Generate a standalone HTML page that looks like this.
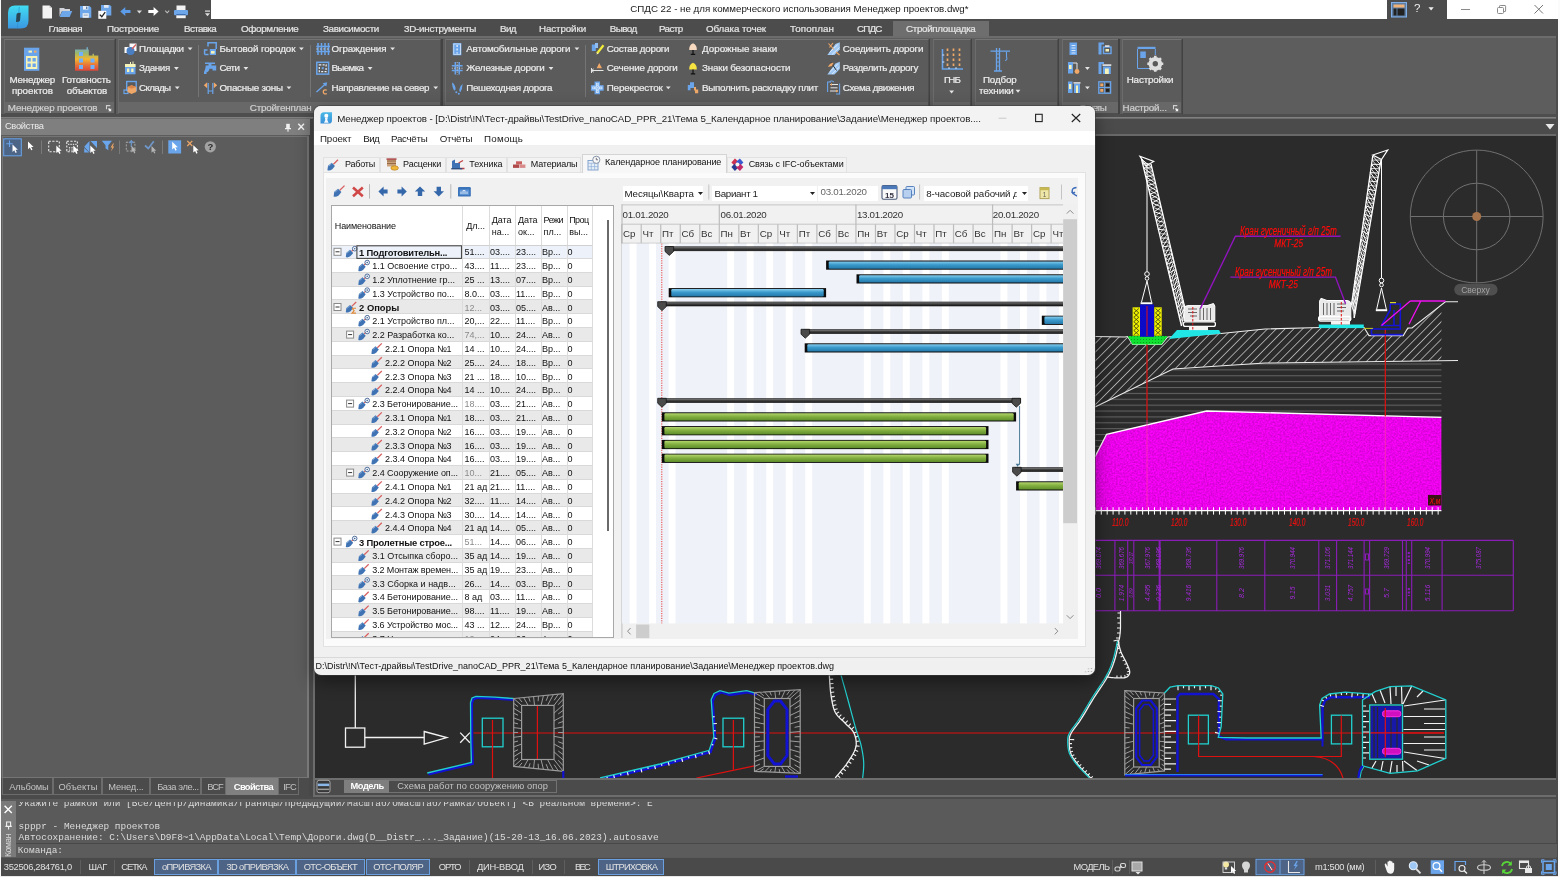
<!DOCTYPE html>
<html lang="ru"><head><meta charset="utf-8"><title>СПДС 22</title>
<style>
html,body{margin:0;padding:0}
body{width:1560px;height:877px;overflow:hidden;position:relative;background:#5c5c5c;font-family:"Liberation Sans",sans-serif;font-size:11px;color:#e6e6e6}
.a{position:absolute}
.t{position:absolute;white-space:nowrap;line-height:1}
svg{position:absolute;overflow:visible}
#app{position:absolute;left:0;top:0;width:1560px;height:877px;overflow:hidden;will-change:transform}

</style></head>
<body>
<div id="app">
<!-- sec_frame -->
<div class="a" style="left:0px;top:0px;width:1560px;height:19px;background:#4c4c4c;"></div>
<div class="a" style="left:211px;top:0px;width:1349px;height:19px;background:#ffffff;"></div>
<div class="a" style="left:1386.7px;top:0px;width:60.6px;height:19px;background:#4c4c4c;"></div>
<div class="a" style="left:0px;top:19px;width:1560px;height:17px;background:#4c4c4c;"></div>
<div class="a" style="left:1556px;top:19px;width:2px;height:858px;background:#4c4c4c;"></div>
<span class="t" style="left:630.30px;top:3.62px;font-size:9.75px;color:#1a1a1a;letter-spacing:-0.015px;">СПДС 22 - не для коммерческого использования Менеджер проектов.dwg*</span>
<div class="a" style="left:893px;top:21px;width:95.5px;height:16px;background:#6e6e6e;"></div>
<span class="t" style="left:48.50px;top:24.00px;font-size:9.8px;color:#e4e4e4;letter-spacing:-0.543px;-webkit-text-stroke-width:.22px;">Главная</span>
<span class="t" style="left:107.00px;top:24.00px;font-size:9.8px;color:#e4e4e4;letter-spacing:-0.257px;-webkit-text-stroke-width:.22px;">Построение</span>
<span class="t" style="left:184.00px;top:24.00px;font-size:9.8px;color:#e4e4e4;letter-spacing:-0.632px;-webkit-text-stroke-width:.22px;">Вставка</span>
<span class="t" style="left:241.00px;top:24.00px;font-size:9.8px;color:#e4e4e4;letter-spacing:-0.333px;-webkit-text-stroke-width:.22px;">Оформление</span>
<span class="t" style="left:323.00px;top:24.00px;font-size:9.8px;color:#e4e4e4;letter-spacing:-0.316px;-webkit-text-stroke-width:.22px;">Зависимости</span>
<span class="t" style="left:404.00px;top:24.00px;font-size:9.8px;color:#e4e4e4;letter-spacing:-0.237px;-webkit-text-stroke-width:.22px;">3D-инструменты</span>
<span class="t" style="left:500.00px;top:24.00px;font-size:9.8px;color:#e4e4e4;letter-spacing:-0.576px;-webkit-text-stroke-width:.22px;">Вид</span>
<span class="t" style="left:539.00px;top:24.00px;font-size:9.8px;color:#e4e4e4;letter-spacing:-0.117px;-webkit-text-stroke-width:.22px;">Настройки</span>
<span class="t" style="left:609.70px;top:24.00px;font-size:9.8px;color:#e4e4e4;letter-spacing:-0.526px;-webkit-text-stroke-width:.22px;">Вывод</span>
<span class="t" style="left:659.00px;top:24.00px;font-size:9.8px;color:#e4e4e4;letter-spacing:-0.600px;-webkit-text-stroke-width:.22px;">Растр</span>
<span class="t" style="left:706.00px;top:24.00px;font-size:9.8px;color:#e4e4e4;letter-spacing:-0.091px;-webkit-text-stroke-width:.22px;">Облака точек</span>
<span class="t" style="left:790.00px;top:24.00px;font-size:9.8px;color:#e4e4e4;letter-spacing:0.086px;-webkit-text-stroke-width:.22px;">Топоплан</span>
<span class="t" style="left:857.00px;top:24.00px;font-size:9.8px;color:#e4e4e4;letter-spacing:-0.834px;-webkit-text-stroke-width:.22px;">СПДС</span>
<span class="t" style="left:906.00px;top:24.00px;font-size:9.8px;color:#e4e4e4;letter-spacing:-0.324px;-webkit-text-stroke-width:.22px;">Стройплощадка</span>
<svg style="left:8px;top:5px" width="21" height="24" viewBox="0 0 21 24">
<defs><linearGradient id="lg1" x1="0" y1="0" x2="0" y2="1"><stop offset="0" stop-color="#41dcf2"/><stop offset="1" stop-color="#3a97e2"/></linearGradient></defs>
<path d="M7 0.5 H20.5 V16 Q20.5 23.5 13 23.5 H0 V7.5 Q0 0.5 7 0.5 Z" fill="url(#lg1)"/>
<path d="M11.3 2 L9.3 23.5" stroke="#2f86c8" stroke-width="1" opacity=".55"/>
<path d="M8.5 9.4 Q8.7 8.1 10 8 L12.7 7.7 L12 15.6 Q11.8 16.6 10.6 16.7 L8 16.9 Z" fill="#2b4654"/>
</svg>
<svg style="left:40px;top:2px" width="175" height="17" viewBox="40 2 175 17">
<path d="M42.5 5.5 H49.5 L52 8 V18.5 H42.5 Z" fill="#f4f4f4"/><path d="M49.5 5.5 V8 H52 Z" fill="#c8c8c8"/>
<path d="M59.5 8 H64 L65 9 H70 V11 H62 L59.5 16.5 Z" fill="#d0d4da"/><path d="M62.3 11 H72.3 L69.6 17 H59.6 Z" fill="#6ea6ea"/>
<path d="M80 6 H89.5 L91.3 7.8 V17.8 H80 Z" fill="#6ea6ea"/><rect x="83" y="6" width="5.3" height="3.6" fill="#e9eef6"/><rect x="86" y="6.6" width="1.4" height="2.4" fill="#5f7fa8"/><rect x="82.6" y="13.2" width="6.2" height="4.6" fill="#e9eef6"/><rect x="83.6" y="14.6" width="4.2" height="1" fill="#8ea2bd"/>
<path d="M101 5 H109.8 L111.3 6.5 V15.5 H101 Z" fill="#6ea6ea"/><rect x="104" y="5" width="4.6" height="2.8" fill="#dfe8f5"/>
<rect x="98.3" y="10.8" width="8" height="8" fill="#fafafa"/><path d="M99.8 14.6 L101.8 16.8 L105.2 12.2" stroke="#222" stroke-width="1.3" fill="none"/>
<path d="M120.3 11.5 L125.3 7 V10 H130.5 V13 H125.3 V16 Z" fill="#5b9be8"/>
<path d="M136.8 10.5 H142 L139.4 13.6 Z" fill="#d8d8d8"/>
<path d="M158.6 11.5 L153.6 7 V10 H148.3 V13 H153.6 V16 Z" fill="#ffffff"/>
<path d="M165.2 10.7 L167.2 12.8 L169.2 10.7" stroke="#bdbdbd" stroke-width="1.1" fill="none"/>
<rect x="176.5" y="5.5" width="9" height="4.5" fill="#f2f2f2"/><rect x="174" y="10" width="14" height="5.2" rx="1" fill="#6ea6ea"/><rect x="176.3" y="15.2" width="9.4" height="3" fill="#f2f2f2"/><rect x="176.3" y="14" width="9.4" height="1.2" fill="#3e6fb2"/>
<rect x="205" y="10.5" width="5" height="1.2" fill="#e0e0e0"/><path d="M205 13.3 H210 L207.5 16.2 Z" fill="#e0e0e0"/>
</svg>
<svg style="left:1385px;top:0px" width="175" height="19" viewBox="1385 0 175 19">
<rect x="1391.5" y="2.5" width="15" height="14.5" fill="#5f7ea5" stroke="#7fb0ea" stroke-width="1"/>
<rect x="1393.5" y="4.5" width="11" height="3" fill="#f0b277"/><rect x="1393.5" y="8.5" width="3" height="7" fill="#222"/><rect x="1397.5" y="8.5" width="7" height="7" fill="#222"/>
<path d="M1428.5 7.3 H1433.7 L1431.1 10.4 Z" fill="#f0f0f0"/>
<path d="M1461 9.5 H1470" stroke="#8a8a8a" stroke-width="1"/>
<rect x="1497.5" y="7.5" width="6" height="6" rx="1" fill="none" stroke="#8a8a8a" stroke-width="1"/><path d="M1499.5 7.5 V6.2 Q1499.5 5.5 1500.3 5.5 H1505 Q1505.6 5.5 1505.6 6.2 V11 Q1505.6 11.6 1505 11.6 H1503.6" fill="none" stroke="#8a8a8a" stroke-width="1"/>
<path d="M1534.5 5 L1543 13.5 M1543 5 L1534.5 13.5" stroke="#777" stroke-width="1"/>
</svg>
<span class="t" style="left:1414.00px;top:3.45px;font-size:11.5px;color:#f0f0f0;">?</span>
<!-- sec_ribbon -->
<div style="-webkit-text-stroke-width:.22px">
<div class="a" style="left:0px;top:36px;width:1556px;height:2px;background:#6c6c6c;"></div>
<div class="a" style="left:1px;top:38px;width:1555px;height:76px;background:#5d5d5d;"></div>
<div class="a" style="left:0px;top:114.2px;width:1560px;height:2.8px;background:#4e4e4e;"></div>
<div class="a" style="left:4px;top:38.8px;width:111.3px;height:75.4px;background:#5b5b5b;box-sizing:border-box;border:1px solid #6c6c6c;border-top-color:#747474;border-right-color:#4e4e4e;border-bottom-color:#4e4e4e"></div>
<div class="a" style="left:5px;top:102px;width:109.3px;height:11.3px;background:#686868;"></div>
<div class="a" style="left:114.9px;top:38.8px;width:1.6px;height:75.4px;background:#434343;"></div>
<div class="a" style="left:117.8px;top:38.8px;width:323.7px;height:75.4px;background:#5b5b5b;box-sizing:border-box;border:1px solid #6c6c6c;border-top-color:#747474;border-right-color:#4e4e4e;border-bottom-color:#4e4e4e"></div>
<div class="a" style="left:118.8px;top:102px;width:321.7px;height:11.3px;background:#686868;"></div>
<div class="a" style="left:441.1px;top:38.8px;width:1.6px;height:75.4px;background:#434343;"></div>
<div class="a" style="left:444.6px;top:38.8px;width:484.6px;height:75.4px;background:#5b5b5b;box-sizing:border-box;border:1px solid #6c6c6c;border-top-color:#747474;border-right-color:#4e4e4e;border-bottom-color:#4e4e4e"></div>
<div class="a" style="left:445.6px;top:102px;width:482.6px;height:11.3px;background:#686868;"></div>
<div class="a" style="left:928.8px;top:38.8px;width:1.6px;height:75.4px;background:#434343;"></div>
<div class="a" style="left:932.5px;top:38.8px;width:38.5px;height:75.4px;background:#5b5b5b;box-sizing:border-box;border:1px solid #6c6c6c;border-top-color:#747474;border-right-color:#4e4e4e;border-bottom-color:#4e4e4e"></div>
<div class="a" style="left:933.5px;top:102px;width:36.5px;height:11.3px;background:#686868;"></div>
<div class="a" style="left:970.6px;top:38.8px;width:1.6px;height:75.4px;background:#434343;"></div>
<div class="a" style="left:974.5px;top:38.8px;width:83.5px;height:75.4px;background:#5b5b5b;box-sizing:border-box;border:1px solid #6c6c6c;border-top-color:#747474;border-right-color:#4e4e4e;border-bottom-color:#4e4e4e"></div>
<div class="a" style="left:975.5px;top:102px;width:81.5px;height:11.3px;background:#686868;"></div>
<div class="a" style="left:1057.6px;top:38.8px;width:1.6px;height:75.4px;background:#434343;"></div>
<div class="a" style="left:1061.5px;top:38.8px;width:57px;height:75.4px;background:#5b5b5b;box-sizing:border-box;border:1px solid #6c6c6c;border-top-color:#747474;border-right-color:#4e4e4e;border-bottom-color:#4e4e4e"></div>
<div class="a" style="left:1062.5px;top:102px;width:55px;height:11.3px;background:#686868;"></div>
<div class="a" style="left:1118.1px;top:38.8px;width:1.6px;height:75.4px;background:#434343;"></div>
<div class="a" style="left:1121.5px;top:38.8px;width:60.5px;height:75.4px;background:#5b5b5b;box-sizing:border-box;border:1px solid #6c6c6c;border-top-color:#747474;border-right-color:#4e4e4e;border-bottom-color:#4e4e4e"></div>
<div class="a" style="left:1122.5px;top:102px;width:58.5px;height:11.3px;background:#686868;"></div>
<div class="a" style="left:1181.6px;top:38.8px;width:1.6px;height:75.4px;background:#434343;"></div>
<span class="t" style="left:9.60px;top:75.30px;font-size:9.8px;color:#ececec;letter-spacing:-0.268px;">Менеджер</span>
<span class="t" style="left:11.90px;top:85.60px;font-size:9.8px;color:#ececec;letter-spacing:-0.011px;">проектов</span>
<span class="t" style="left:62.00px;top:75.30px;font-size:9.8px;color:#ececec;letter-spacing:-0.147px;">Готовность</span>
<span class="t" style="left:66.70px;top:85.60px;font-size:9.8px;color:#ececec;letter-spacing:-0.181px;">объектов</span>
<span class="t" style="left:7.80px;top:102.60px;font-size:9.8px;color:#cfcfcf;letter-spacing:-0.103px;">Менеджер проектов</span>
<span class="t" style="left:249.80px;top:102.60px;font-size:9.8px;color:#cfcfcf;letter-spacing:-0.195px;">Стройгенплан</span>
<span class="t" style="left:1079.00px;top:102.60px;font-size:9.8px;color:#cfcfcf;letter-spacing:-1.195px;">Отчеты</span>
<span class="t" style="left:1122.60px;top:102.60px;font-size:9.8px;color:#cfcfcf;letter-spacing:-0.236px;">Настрой...</span>
<span class="t" style="left:139.00px;top:43.60px;font-size:9.8px;color:#ececec;letter-spacing:-0.339px;">Площадки</span>
<span class="t" style="left:139.00px;top:63.20px;font-size:9.8px;color:#ececec;letter-spacing:-0.413px;">Здания</span>
<span class="t" style="left:139.00px;top:82.60px;font-size:9.8px;color:#ececec;letter-spacing:-0.651px;">Склады</span>
<span class="t" style="left:219.50px;top:43.60px;font-size:9.8px;color:#ececec;letter-spacing:-0.073px;">Бытовой городок</span>
<span class="t" style="left:219.50px;top:63.20px;font-size:9.8px;color:#ececec;letter-spacing:-0.566px;">Сети</span>
<span class="t" style="left:219.50px;top:82.60px;font-size:9.8px;color:#ececec;letter-spacing:-0.250px;">Опасные зоны</span>
<span class="t" style="left:331.40px;top:43.60px;font-size:9.8px;color:#ececec;letter-spacing:-0.101px;">Ограждения</span>
<span class="t" style="left:331.40px;top:63.20px;font-size:9.8px;color:#ececec;letter-spacing:-0.620px;">Выемка</span>
<span class="t" style="left:331.40px;top:82.60px;font-size:9.8px;color:#ececec;letter-spacing:-0.303px;">Направление на север</span>
<span class="t" style="left:466.20px;top:43.60px;font-size:9.8px;color:#ececec;letter-spacing:-0.150px;">Автомобильные дороги</span>
<span class="t" style="left:466.20px;top:63.20px;font-size:9.8px;color:#ececec;letter-spacing:-0.189px;">Железные дороги</span>
<span class="t" style="left:466.20px;top:82.60px;font-size:9.8px;color:#ececec;letter-spacing:-0.294px;">Пешеходная дорога</span>
<span class="t" style="left:606.70px;top:43.60px;font-size:9.8px;color:#ececec;letter-spacing:-0.285px;">Состав дороги</span>
<span class="t" style="left:606.70px;top:63.20px;font-size:9.8px;color:#ececec;letter-spacing:-0.138px;">Сечение дороги</span>
<span class="t" style="left:606.70px;top:82.60px;font-size:9.8px;color:#ececec;letter-spacing:-0.145px;">Перекресток</span>
<span class="t" style="left:702.00px;top:43.60px;font-size:9.8px;color:#ececec;letter-spacing:0.001px;">Дорожные знаки</span>
<span class="t" style="left:702.00px;top:63.20px;font-size:9.8px;color:#ececec;letter-spacing:-0.162px;">Знаки безопасности</span>
<span class="t" style="left:702.00px;top:82.60px;font-size:9.8px;color:#ececec;letter-spacing:-0.297px;">Выполнить раскладку плит</span>
<span class="t" style="left:842.70px;top:43.60px;font-size:9.8px;color:#ececec;letter-spacing:-0.167px;">Соединить дороги</span>
<span class="t" style="left:842.70px;top:63.20px;font-size:9.8px;color:#ececec;letter-spacing:-0.339px;">Разделить дорогу</span>
<span class="t" style="left:842.70px;top:82.60px;font-size:9.8px;color:#ececec;letter-spacing:-0.373px;">Схема движения</span>
<span class="t" style="left:944.00px;top:75.30px;font-size:9.8px;color:#ececec;letter-spacing:-0.939px;">ГНБ</span>
<span class="t" style="left:983.00px;top:75.30px;font-size:9.8px;color:#ececec;letter-spacing:-0.168px;">Подбор</span>
<span class="t" style="left:979.00px;top:85.60px;font-size:9.8px;color:#ececec;letter-spacing:-0.051px;">техники</span>
<span class="t" style="left:1126.70px;top:75.30px;font-size:9.8px;color:#ececec;letter-spacing:-0.150px;">Настройки</span>
<div class="a" style="left:197.5px;top:45px;width:1px;height:52px;background:#747474;"></div>
<div class="a" style="left:309.5px;top:45px;width:1px;height:52px;background:#747474;"></div>
<div class="a" style="left:584.7px;top:45px;width:1px;height:52px;background:#747474;"></div>
<svg style="left:0;top:0" width="1560" height="120" viewBox="0 0 1560 120"><path d="M187.7 47.4 h4.8 l-2.4 2.9 z" fill="#e4e4e4"/><path d="M174 67 h4.8 l-2.4 2.9 z" fill="#e4e4e4"/><path d="M174.8 86.4 h4.8 l-2.4 2.9 z" fill="#e4e4e4"/><path d="M299 47.4 h4.8 l-2.4 2.9 z" fill="#e4e4e4"/><path d="M243.5 67 h4.8 l-2.4 2.9 z" fill="#e4e4e4"/><path d="M286.5 86.4 h4.8 l-2.4 2.9 z" fill="#e4e4e4"/><path d="M390.2 47.4 h4.8 l-2.4 2.9 z" fill="#e4e4e4"/><path d="M367.7 67 h4.8 l-2.4 2.9 z" fill="#e4e4e4"/><path d="M433.3 86.4 h4.8 l-2.4 2.9 z" fill="#e4e4e4"/><path d="M574.5 47.4 h4.8 l-2.4 2.9 z" fill="#e4e4e4"/><path d="M548.6 67 h4.8 l-2.4 2.9 z" fill="#e4e4e4"/><path d="M665.9 86.4 h4.8 l-2.4 2.9 z" fill="#e4e4e4"/><path d="M949.2 90.6 h4.8 l-2.4 2.9 z" fill="#e4e4e4"/><path d="M1015.6 89.8 h4.8 l-2.4 2.9 z" fill="#e4e4e4"/><path d="M1085 67 h4.8 l-2.4 2.9 z" fill="#e4e4e4"/><path d="M1085 86.4 h4.8 l-2.4 2.9 z" fill="#e4e4e4"/><path d="M106.5 109.2 v-3.6 h3.8" stroke="#d0d0d0" stroke-width="1.1" fill="none"/><path d="M109.1 108 l1.2 1.2 l.9 -.9 v2.9 h-2.9 l.9 -.9 l-1.2 -1.2 z" fill="#f4f4f4"/><path d="M1173.5 109.2 v-3.6 h3.8" stroke="#d0d0d0" stroke-width="1.1" fill="none"/><path d="M1176.1 108 l1.2 1.2 l.9 -.9 v2.9 h-2.9 l.9 -.9 l-1.2 -1.2 z" fill="#f4f4f4"/><rect x="24" y="47.7" width="15.3" height="23.1" fill="#6aa5ec"/><rect x="26" y="50" width="11.3" height="4" fill="#6aa5ec"/><rect x="28.5" y="50.6" width="3.5" height="2" fill="#f5f3b8"/><rect x="34" y="50.6" width="2.5" height="2" fill="#f0a868"/><rect x="26" y="56" width="11.3" height="13" fill="#f5f3b8"/><rect x="27.5" y="58" width="3.3" height="3.5" fill="#6aa5ec"/><rect x="32.5" y="58" width="3.3" height="3.5" fill="#6aa5ec"/><rect x="27.5" y="63.5" width="3.3" height="3.5" fill="#6aa5ec"/><rect x="32.5" y="63.5" width="3.3" height="3.5" fill="#6aa5ec"/><defs><linearGradient id="rg" x1="0" y1="0" x2="0" y2="1"><stop offset="0" stop-color="#6fa8d8"/><stop offset=".25" stop-color="#9ab86a"/><stop offset=".5" stop-color="#f2b730"/><stop offset=".75" stop-color="#e8753a"/><stop offset="1" stop-color="#d9483e"/></linearGradient></defs><path d="M75 49.5 H86.5 V47.2 H88 V49.5 H88.8 V55.5 H92.5 V53.8 H94 V55.5 H98.3 V70.8 H75 Z" fill="url(#rg)"/><rect x="79" y="52" width="4" height="4" fill="#6fb0ff"/><rect x="79" y="58.5" width="4" height="4" fill="#6fb0ff"/><rect x="79" y="65" width="4" height="4" fill="#6fb0ff"/><rect x="90.5" y="58.5" width="4" height="4" fill="#6fb0ff"/><rect x="90.5" y="65" width="4" height="4" fill="#6fb0ff"/><rect x="129.5" y="43.5" width="7" height="7.5" fill="#fafafa"/><rect x="124.5" y="47" width="5" height="6" fill="#fafafa"/><circle cx="130.5" cy="51" r="4" fill="#4b7fc4"/><path d="M132 49 L136 44.5" stroke="#d65c5c" stroke-width="1.2"/><rect x="125" y="64.5" width="10.5" height="9.8" fill="#6aa5ec"/><rect x="125" y="64" width="10.5" height="3" fill="#f5f3b8"/><rect x="127" y="68.5" width="2.3" height="3.5" fill="#f5f3b8"/><rect x="131.2" y="68.5" width="2.3" height="3.5" fill="#f5f3b8"/><path d="M130.5 64 v-2 M133 64 v-2.5" stroke="#f5f3b8" stroke-width="1"/><rect x="126.7" y="81.5" width="9.5" height="9" fill="none" stroke="#6aa5ec" stroke-width="1.4"/><rect x="124" y="90" width="4" height="3.5" fill="none" stroke="#6aa5ec" stroke-width="1.2"/><path d="M127.5 87 L131.5 85.2 L136.3 87 V92 L131.5 94 L127.5 92 Z" fill="#f0a868"/><path d="M127.5 87 L131.5 88.8 L136.3 87 L131.5 85.2 Z" fill="#d9854a"/><path d="M208 46.5 V42.8 H216.2 V49 M204.6 54.5 V50 H207.5 M204.6 54.5 H208.5" stroke="#6aa5ec" stroke-width="1.5" fill="none"/><rect x="209.8" y="49" width="6.2" height="6" fill="#6aa5ec"/><rect x="211" y="51" width="3.6" height="2.6" fill="#f5f3b8"/><path d="M205 62.5 H215 V64 H211.5 V65.5 H216.2 V70.5 H212.5 V68.7 H209.5 Q208.8 72 206.5 72.3 V74 H204 V72 Q205.5 70 205.8 65.5 H208.5 V64 H205 Z" fill="#6aa5ec"/><path d="M203.8 85.3 L207.2 82.3 V88.3 Z M217.2 85.3 L213.8 82.3 V88.3 Z" fill="#f0a868"/><path d="M208.2 83 V94 M212.8 83 V94 M208.2 91 H212.8" stroke="#6aa5ec" stroke-width="1.2" fill="none"/><path d="M318 43 V55 M321.5 43 V55 M325 43 V55 M328.5 43 V55" stroke="#6aa5ec" stroke-width="1.5"/><path d="M316.3 46.5 H330 M316.3 51.5 H330" stroke="#6aa5ec" stroke-width="1.3"/><path d="M316.3 49 H330" stroke="#e8f0fb" stroke-width=".8" stroke-dasharray="1.5 2"/><rect x="316.8" y="62.3" width="11.8" height="11.8" fill="none" stroke="#6aa5ec" stroke-width="1.5"/><rect x="319.3" y="64.8" width="6.8" height="6.8" fill="none" stroke="#e8f0fb" stroke-width="1.2" stroke-dasharray="2 1.3"/><rect x="321.7" y="67.2" width="2" height="2" fill="#6aa5ec"/><path d="M316.5 92 L326 83.5" stroke="#6aa5ec" stroke-width="1.3"/><path d="M327.2 82.2 L322.6 83.2 L326.2 86.6 Z" fill="#6aa5ec"/><path d="M326.8 90.2 Q323.3 89.2 323.3 91.8 Q323.3 94.4 326.8 93.6" stroke="#f0a868" stroke-width="1.3" fill="none"/><rect x="452.8" y="43" width="8.6" height="12.3" fill="#6aa5ec"/><rect x="453.8" y="44" width="6.6" height="10.3" fill="none" stroke="#dbe8fa" stroke-width=".8"/><path d="M457.1 45 V53.5" stroke="#fff" stroke-width="1.1" stroke-dasharray="2 1.6"/><path d="M455.3 62 V74.5 M459.2 62 V74.5 M451.8 65.8 H462.6 M451.8 70.6 H462.6" stroke="#6aa5ec" stroke-width="1.5"/><path d="M457.2 62 V74.5 M451.8 68.2 H462.6" stroke="#dfe9f8" stroke-width=".7" stroke-dasharray="1.2 1.2"/><path d="M452 82.5 Q454.6 83.5 455.6 88 Q455.8 90.5 454.2 90.5 Q452.3 88 452 82.5 Z M462.6 84 Q460 85.5 459.3 89.5 Q459 92 460.5 92 Q462.3 89.5 462.6 84 Z" fill="#6aa5ec"/><circle cx="456.3" cy="92.3" r="1" fill="#6aa5ec"/><circle cx="458.8" cy="93.8" r="1" fill="#6aa5ec"/><rect x="591.8" y="44.5" width="4" height="6.5" fill="#6aa5ec"/><rect x="595" y="43" width="3" height="5" fill="#8fbdf2"/><path d="M597 53.5 L603.5 45.2" stroke="#f2ec3a" stroke-width="2.2"/><path d="M596.2 54.6 L597.6 52.6 L598.4 53.6 Z" fill="#eee"/><path d="M591.5 68 V73 M591.5 70.5 H603.5 M591.5 70.5 l2.2 -1.6 m-2.2 1.6 l2.2 1.6" stroke="#e6e6e6" stroke-width="1" fill="none"/><path d="M599.3 63 L602 68.2 H596.6 Z" fill="#f0a868"/><path d="M595.2 82.2 H599.4 V85.8 H603 V90 H599.4 V93.6 H595.2 V90 H591.6 V85.8 H595.2 Z" fill="#cfe4fb" stroke="#6aa5ec" stroke-width="1.3"/><path d="M597.3 83.5 V92.5 M593 87.9 H601.8" stroke="#6aa5ec" stroke-width=".8" stroke-dasharray="1.2 1.2"/><path d="M689.2 50 Q689 44.6 693 43.2 Q697 44.6 696.8 50 Z" fill="#f7d9c0"/><path d="M693 50 V54 M690.8 54.3 H695.2" stroke="#111" stroke-width="1.2"/><path d="M689.2 69.6 Q689 64.2 693 62.8 Q697 64.2 696.8 69.6 Z" fill="#f8e440"/><path d="M693 69.6 V73.6 M690.8 73.9 H695.2" stroke="#111" stroke-width="1.2"/><path d="M687.8 85 H690 V82.3 H694 V88 H690.5 V90.2 H687.8 Z" fill="#6aa5ec"/><path d="M694 87 H696 V89.5 H698.2 V93.3 H695 V90.6 H694 Z" fill="#f0a868"/><path d="M827.3 55 L835.5 44 L839.8 42.2 V49.5 L834.5 55 Z" fill="#9fc9f4"/><path d="M829.5 52.5 L837.8 44.5 M832 54.5 L839.5 47.5" stroke="#e9f3fd" stroke-width=".8"/><path d="M828.5 43.5 L834 49.5 M833 43 L829.5 47.5 M836 52 L839.5 55" stroke="#f0a868" stroke-width="1.1"/><path d="M827.3 74.5 L835.5 63.5 L839.8 61.7 V69 L834.5 74.5 Z" fill="#9fc9f4"/><path d="M829.5 72 L837.8 64 M832 74 L839.5 67" stroke="#e9f3fd" stroke-width=".8"/><path d="M831 62.5 L836.5 70.5" stroke="#333" stroke-width="1"/><path d="M828 67 Q829.5 63 833.5 62.8 L832 66 Z" fill="#f0a868"/><path d="M831 82 H827.6 V92 M836 94 H839.6 V83.5" stroke="#6aa5ec" stroke-width="1.1" fill="none"/><path d="M830 84.5 H838 M830.5 87.8 H837.5 M830 91 H838" stroke="#e6e6e6" stroke-width="1"/><path d="M830 84.5 l2 -1.5 v3 z M838 91 l-2 -1.5 v3 z" fill="#f0a868"/><path d="M829.5 81.5 Q832 80 834 82" stroke="#6aa5ec" stroke-width="1" fill="none"/><path d="M942.5 49 V69 H963" stroke="#6aa5ec" stroke-width="1.6" fill="none"/><path d="M942.5 55 h1.8 M942.5 62 h1.8 M949 69 v-1.8 M956 69 v-1.8" stroke="#dbe8fa" stroke-width="1"/><path d="M947.5 48.5 V66.5" stroke="#f0a868" stroke-width="1.7" stroke-dasharray="2.5 2.5"/><path d="M953.5 48.5 V66.5" stroke="#f0a868" stroke-width="1.7" stroke-dasharray="2.5 2.5"/><path d="M959.5 48.5 V66.5" stroke="#f0a868" stroke-width="1.7" stroke-dasharray="2.5 2.5"/><path d="M996.5 48 V71 M999.5 48 V71 M990.5 51.2 H1010 M994 71 H1002" stroke="#6aa5ec" stroke-width="1.3" fill="none"/><path d="M996.5 54 H999.5 M996.5 58 H999.5 M996.5 62 H999.5 M996.5 66 H999.5" stroke="#6aa5ec" stroke-width=".9"/><path d="M1006.5 51.5 V57 Q1007.8 60 1005 60.5" stroke="#6aa5ec" stroke-width="1.1" fill="none"/><rect x="1069.5" y="42.5" width="7.5" height="12.5" fill="#6aa5ec"/><path d="M1071.5 45.5 h4 M1071.5 48 h4 M1071.5 50.5 h4 M1071.5 53 h4" stroke="#e6effb" stroke-width=".9"/><rect x="1068" y="62" width="5" height="11.5" fill="#6aa5ec"/><rect x="1069" y="65" width="2.6" height="4" fill="#f5f3b8"/><path d="M1073 63 H1077 V70" stroke="#e8e8e8" stroke-width="1" fill="none"/><circle cx="1077" cy="71.5" r="2.4" fill="#f0a868"/><rect x="1068" y="81.5" width="4.5" height="11.5" fill="#6aa5ec"/><rect x="1069" y="84" width="2.2" height="5" fill="#f5f3b8"/><rect x="1074" y="83.5" width="6" height="9.5" fill="#6aa5ec"/><rect x="1076" y="85.5" width="2" height="7.5" fill="#f5f3b8"/><rect x="1073.5" y="82.2" width="7" height="1.4" fill="#e8e8e8"/><path d="M1098.5 42.5 H1104 V44.5 H1101.5 V54.5 H1098.5 Z" fill="#6aa5ec"/><rect x="1103.5" y="47" width="7.5" height="6.5" fill="none" stroke="#6aa5ec" stroke-width="1.4"/><rect x="1105.5" y="49" width="3.5" height="2.5" fill="#f5f3b8"/><rect x="1105" y="45.3" width="4.5" height="1.6" fill="#e8e8e8"/><path d="M1098.5 62 H1104 V64 H1101.5 V74 H1098.5 Z" fill="#6aa5ec"/><rect x="1103" y="66.5" width="7.8" height="7.5" fill="#6aa5ec"/><rect x="1105" y="68.5" width="3.8" height="5.5" fill="#f5f3b8"/><rect x="1102.5" y="64.3" width="8.8" height="1.6" fill="#e8e8e8"/><rect x="1098.8" y="81.8" width="11.8" height="11.4" fill="none" stroke="#6aa5ec" stroke-width="1.3"/><path d="M1104.7 81.8 V93.2 M1098.8 87.5 H1110.6" stroke="#6aa5ec" stroke-width="1"/><rect x="1100.3" y="83.5" width="3" height="2.8" fill="#f0a868"/><rect x="1100.3" y="89" width="3" height="2.8" fill="#f0a868"/><rect x="1106" y="83.5" width="3.2" height="2.8" fill="#222"/><rect x="1106" y="89" width="3.2" height="2.8" fill="#222"/><path d="M1137.5 46.8 H1155.5 V49 H1137.5 Z" fill="#6aa5ec"/><path d="M1137.5 49 V68.5 H1150 M1155.3 49 V55" stroke="#6aa5ec" stroke-width="1" fill="none"/><rect x="1140.3" y="51.5" width="5.5" height="6.5" fill="#6aa5ec"/><g transform="translate(1155.3 63.8)"><circle r="5.2" fill="none" stroke="#dedede" stroke-width="3.4"/><path d="M0 -8 V8 M-8 0 H8 M-5.7 -5.7 L5.7 5.7 M-5.7 5.7 L5.7 -5.7" stroke="#dedede" stroke-width="2.6"/><circle r="5.3" fill="#dedede"/><circle r="2.7" fill="#595959"/></g></svg>
</div>
<!-- sec_panel -->
<div class="a" style="left:1px;top:117.5px;width:308.5px;height:678px;background:#5c5c5c;"></div>
<div class="a" style="left:1px;top:777.5px;width:308px;height:18px;background:#4b4b4b;"></div>
<div class="a" style="left:308.8px;top:119px;width:4.2px;height:678.5px;background:#484848;"></div>
<div class="a" style="left:313px;top:119px;width:2px;height:678.5px;background:#6c6c6c;"></div>
<div class="a" style="left:1px;top:117px;width:1555px;height:1.2px;background:#808080;"></div>
<div class="a" style="left:1px;top:118.2px;width:1555px;height:0.9px;background:#6c6c6c;"></div>
<div class="a" style="left:1px;top:119px;width:308.5px;height:16.2px;background:#7f7f7f;"></div>
<span class="t" style="left:4.90px;top:122.05px;font-size:9.3px;color:#ececec;letter-spacing:-0.254px;">Свойства</span>
<div class="a" style="left:1.5px;top:136.2px;width:307.3px;height:641.5px;box-sizing:border-box;border:1px solid #747474;border-right:2px solid #787878;background:#5c5c5c"></div>
<svg style="left:0;top:0" width="320" height="160" viewBox="0 0 320 160"><path d="M286.2 123.8 H289.8 V128.3 H286.2 Z" fill="#f0f0f0"/><path d="M285 128.6 H291 M288 129 V131.8" stroke="#f0f0f0" stroke-width="1.1" fill="none"/><path d="M298.3 123.8 L304 129.8 M304 123.8 L298.3 129.8" stroke="#f4f4f4" stroke-width="1.4"/><rect x="3.7" y="138.8" width="17.6" height="17" fill="#4d6587" stroke="#6aa5ec" stroke-width="1"/><path d="M9.5 140.5 V147 M6.3 143.8 H12.7" stroke="#6aa5ec" stroke-width="1.1"/><path transform="translate(12.5 144.5) scale(0.86)" d="M0 0 V8.6 L2.1 6.7 L3.6 9.8 L5 9.1 L3.5 6.1 L6.2 6 Z" fill="#ffffff" opacity="1"/><path transform="translate(28 141.5) scale(0.903)" d="M0 0 V8.6 L2.1 6.7 L3.6 9.8 L5 9.1 L3.5 6.1 L6.2 6 Z" fill="#ffffff" opacity="1"/><path d="M41.5 140.5 V154" stroke="#7a7a7a" stroke-width="1"/><path d="M119.5 140.5 V154" stroke="#7a7a7a" stroke-width="1"/><path d="M162.5 140.5 V154" stroke="#7a7a7a" stroke-width="1"/><rect x="48.7" y="141.2" width="10.6" height="10.6" fill="none" stroke="#e8e8e8" stroke-width="1.1" stroke-dasharray="2.2 1.4"/><path transform="translate(56.3 145.5) scale(0.86)" d="M0 0 V8.6 L2.1 6.7 L3.6 9.8 L5 9.1 L3.5 6.1 L6.2 6 Z" fill="#ffffff" opacity="1"/><rect x="66.8" y="141.2" width="10.6" height="10.6" fill="none" stroke="#e8e8e8" stroke-width="1.1" stroke-dasharray="2.2 1.4"/><path d="M68 144.3 H77 M69.5 147 v4 M72 147 v4 M74.5 147 v4" stroke="#d8d8d8" stroke-width="1.2" stroke-dasharray="1.4 1"/><path transform="translate(73.3 145.5) scale(0.86)" d="M0 0 V8.6 L2.1 6.7 L3.6 9.8 L5 9.1 L3.5 6.1 L6.2 6 Z" fill="#ffffff" opacity="1"/><path d="M84.2 146.7 L89.5 141 V152.4 Z M90.5 141 H97 V148 Z M84.2 152.5 H89 L84.2 148 Z" fill="#6aa5ec"/><path transform="translate(90.3 145.5) scale(0.86)" d="M0 0 V8.6 L2.1 6.7 L3.6 9.8 L5 9.1 L3.5 6.1 L6.2 6 Z" fill="#ffffff" opacity="1"/><path d="M101.8 140.8 H112 L108.3 145.2 V150.3 L105.5 148.2 V145.2 Z" fill="#6aa5ec"/><path d="M113 143.5 L110.6 147.6 H112.4 L110.8 151.6 L114.3 146.6 H112.5 L114 143.5 Z" fill="#f0a868"/><rect x="126.3" y="142.2" width="8.6" height="8.8" fill="none" stroke="#a8a8a8" stroke-width="1" stroke-dasharray="2 1.4"/><path d="M131.3 147 V141 M129.3 143 L131.3 140.6 L133.3 143" stroke="#6f97c9" stroke-width="1.2" fill="none"/><path transform="translate(131.5 145.8) scale(0.774)" d="M0 0 V8.6 L2.1 6.7 L3.6 9.8 L5 9.1 L3.5 6.1 L6.2 6 Z" fill="#b4b4b4" opacity="1"/><path d="M145 145.5 L148.3 148.5 L153.8 141.3" stroke="#6f97c9" stroke-width="1.7" fill="none"/><path transform="translate(151.5 146) scale(0.774)" d="M0 0 V8.6 L2.1 6.7 L3.6 9.8 L5 9.1 L3.5 6.1 L6.2 6 Z" fill="#b4b4b4" opacity="1"/><rect x="168.3" y="140.3" width="12.8" height="13.2" fill="#6aa5ec"/><path transform="translate(172.2 141.8) scale(0.903)" d="M0 0 V8.6 L2.1 6.7 L3.6 9.8 L5 9.1 L3.5 6.1 L6.2 6 Z" fill="#ffffff" opacity="1"/><path d="M187.3 140.8 L192.3 146 M192.3 140.8 L187.3 146" stroke="#f0a868" stroke-width="1.2"/><path transform="translate(193.3 145.2) scale(0.86)" d="M0 0 V8.6 L2.1 6.7 L3.6 9.8 L5 9.1 L3.5 6.1 L6.2 6 Z" fill="#ffffff" opacity="1"/><circle cx="210.3" cy="146.8" r="5.6" fill="#a2a2a2"/></svg>
<span class="t" style="left:207.60px;top:141.95px;font-size:9.5px;color:#2a2a2a;font-weight:bold;">?</span>
<div class="a" style="left:2px;top:777.5px;width:50.5px;height:17.5px;box-sizing:border-box;border:1px solid #6c6c6c;border-top:none;background:#4b4b4b"></div>
<span class="t" style="left:9.20px;top:783.35px;font-size:9.3px;color:#c4c4c4;letter-spacing:-0.079px;">Альбомы</span>
<div class="a" style="left:52.5px;top:777.5px;width:49.3px;height:17.5px;box-sizing:border-box;border:1px solid #6c6c6c;border-top:none;background:#4b4b4b"></div>
<span class="t" style="left:58.50px;top:783.35px;font-size:9.3px;color:#c4c4c4;letter-spacing:0.078px;">Объекты</span>
<div class="a" style="left:101.8px;top:777.5px;width:48.2px;height:17.5px;box-sizing:border-box;border:1px solid #6c6c6c;border-top:none;background:#4b4b4b"></div>
<span class="t" style="left:108.20px;top:783.35px;font-size:9.3px;color:#c4c4c4;letter-spacing:-0.113px;">Менед...</span>
<div class="a" style="left:150px;top:777.5px;width:50.8px;height:17.5px;box-sizing:border-box;border:1px solid #6c6c6c;border-top:none;background:#4b4b4b"></div>
<span class="t" style="left:157.20px;top:783.35px;font-size:9.3px;color:#c4c4c4;letter-spacing:-0.416px;">База эле...</span>
<div class="a" style="left:200.8px;top:777.5px;width:25.6px;height:17.5px;box-sizing:border-box;border:1px solid #6c6c6c;border-top:none;background:#4b4b4b"></div>
<span class="t" style="left:207.20px;top:783.35px;font-size:9.3px;color:#c4c4c4;letter-spacing:-1.067px;">BCF</span>
<div class="a" style="left:226.4px;top:777.5px;width:51.3px;height:17.5px;background:#808080;"></div>
<span class="t" style="left:233.80px;top:783.35px;font-size:9.3px;color:#ffffff;letter-spacing:-0.625px;font-weight:bold;">Свойства</span>
<div class="a" style="left:277.7px;top:777.5px;width:21.8px;height:17.5px;box-sizing:border-box;border:1px solid #6c6c6c;border-top:none;background:#4b4b4b"></div>
<span class="t" style="left:283.30px;top:783.35px;font-size:9.3px;color:#c4c4c4;letter-spacing:-0.760px;">IFC</span>
<!-- sec_drawing -->
<div class="a" style="left:315px;top:119px;width:1241px;height:15px;background:#4b4b4b;"></div>
<div class="a" style="left:315px;top:134px;width:1241px;height:1.6px;background:#686868;"></div>
<div class="a" style="left:315px;top:135.6px;width:1241px;height:642.4px;background:#2b2b2b;"></div>
<svg style="left:0;top:0" width="1560" height="877" viewBox="0 0 1560 877"><defs>
<pattern id="hd" width="6.2" height="6.2" patternUnits="userSpaceOnUse" patternTransform="rotate(-45)"><rect width="6.2" height="0.75" fill="#c4c4c4"/></pattern>
<pattern id="hh" width="10" height="5.88" patternUnits="userSpaceOnUse" y="2.84"><rect width="10" height="1" y="2" fill="#646464"/></pattern>
<filter id="mgf" x="0" y="0" width="100%" height="100%" color-interpolation-filters="sRGB"><feTurbulence type="fractalNoise" baseFrequency="0.55" numOctaves="2" seed="11" result="n"/><feColorMatrix in="n" type="matrix" values="0.35 0 0 0 0.74  0 0 0 0 0.01  0.35 0 0 0 0.74  0 0 0 0 1" result="c"/><feComposite in="c" in2="SourceGraphic" operator="in"/></filter>
<pattern id="gn" width="3" height="3" patternUnits="userSpaceOnUse"><rect width="3" height="3" fill="#10e030"/><rect width="1" height="1" fill="#0a9a20"/></pattern>
<clipPath id="dclip"><rect x="315" y="135.6" width="1241" height="642.4"/></clipPath>
</defs><g clip-path="url(#dclip)" font-family="'Liberation Sans',sans-serif" font-style="italic"><polygon points="1095,336.6 1125,337 1127.6,336.5 1132.6,344.4 1161.5,344.4 1167.7,337 1221,333.5 1265,329 1320,327.5 1364,327.5 1369,335.6 1403.3,335.6 1407.8,328 1412,328 1441.4,305 1441.4,360.7 1265,363 1173,369 1095,407" fill="url(#hd)"/><polygon points="1095,407 1173,369 1265,363 1441.4,360.7 1441.4,417.4 1206.6,411 1106.6,434.3 1095,456.7" fill="url(#hh)"/><polyline points="1095,336.6 1125,337 1127.6,336.5 1132.6,344.4 1161.5,344.4 1167.7,337 1221,333.5 1265,329 1320,327.5 1364,327.5 1369,335.6 1403.3,335.6 1407.8,328 1412,328 1445.4,301.8 1458,301.8" stroke="#ececec" stroke-width="1.05" fill="none"/><polyline points="1095,407 1173,369 1265,363 1458,360.5" stroke="#ececec" stroke-width="1.05" fill="none"/><polygon points="1095,456.7 1106.6,434.3 1206.6,411 1441.4,417.4 1441.4,510.6 1095,510.6" fill="#e905e9" filter="url(#mgf)"/><polyline points="1095,456.7 1106.6,434.3 1206.6,411 1441.4,417.4" stroke="#fff" stroke-width="1.3" fill="none"/><path d="M1147 337 V420 M1385.3 328 V416" stroke="#e01010" stroke-width="1.2"/><path d="M1147 420 V510 M1385.3 416 V510" stroke="#ff3aa0" stroke-width="1" opacity=".7"/><polygon points="1127.6,336 1167.7,336 1161.5,344.4 1132.6,344.4" fill="url(#gn)"/><polygon points="1169,339 1177,330 1219,330 1221,333.5" fill="#20e6e6"/><rect x="1318.8" y="324.5" width="45" height="3.6" fill="#20e6e6"/><path d="M1095 510.7 H1441.4" stroke="#fff" stroke-width="1.2"/><path d="M1095.36 507.2 V514.6 M1101.27 507.2 V514.6 M1107.18 507.2 V514.6 M1113.09 507.2 V514.6 M1119 507.2 V514.6 M1124.91 507.2 V514.6 M1130.82 507.2 V514.6 M1136.73 507.2 V514.6 M1142.64 507.2 V514.6 M1148.55 507.2 V514.6 M1154.46 507.2 V514.6 M1160.37 507.2 V514.6 M1166.28 507.2 V514.6 M1172.19 507.2 V514.6 M1178.1 507.2 V514.6 M1184.01 507.2 V514.6 M1189.92 507.2 V514.6 M1195.83 507.2 V514.6 M1201.74 507.2 V514.6 M1207.65 507.2 V514.6 M1213.56 507.2 V514.6 M1219.47 507.2 V514.6 M1225.38 507.2 V514.6 M1231.29 507.2 V514.6 M1237.2 507.2 V514.6 M1243.11 507.2 V514.6 M1249.02 507.2 V514.6 M1254.93 507.2 V514.6 M1260.84 507.2 V514.6 M1266.75 507.2 V514.6 M1272.66 507.2 V514.6 M1278.57 507.2 V514.6 M1284.48 507.2 V514.6 M1290.39 507.2 V514.6 M1296.3 507.2 V514.6 M1302.21 507.2 V514.6 M1308.12 507.2 V514.6 M1314.03 507.2 V514.6 M1319.94 507.2 V514.6 M1325.85 507.2 V514.6 M1331.76 507.2 V514.6 M1337.67 507.2 V514.6 M1343.58 507.2 V514.6 M1349.49 507.2 V514.6 M1355.4 507.2 V514.6 M1361.31 507.2 V514.6 M1367.22 507.2 V514.6 M1373.13 507.2 V514.6 M1379.04 507.2 V514.6 M1384.95 507.2 V514.6 M1390.86 507.2 V514.6 M1396.77 507.2 V514.6 M1402.68 507.2 V514.6 M1408.59 507.2 V514.6 M1414.5 507.2 V514.6 M1420.41 507.2 V514.6 M1426.32 507.2 V514.6 M1432.23 507.2 V514.6 M1438.14 507.2 V514.6 " stroke="#fff" stroke-width="1"/><text x="1112.1" y="525.9" font-size="10" fill="#e81010" text-anchor="start" textLength="16.3" lengthAdjust="spacingAndGlyphs" stroke="#e81010" stroke-width=".2">110.0</text><text x="1171.1" y="525.9" font-size="10" fill="#e81010" text-anchor="start" textLength="16.3" lengthAdjust="spacingAndGlyphs" stroke="#e81010" stroke-width=".2">120.0</text><text x="1230.1" y="525.9" font-size="10" fill="#e81010" text-anchor="start" textLength="16.3" lengthAdjust="spacingAndGlyphs" stroke="#e81010" stroke-width=".2">130.0</text><text x="1289.1" y="525.9" font-size="10" fill="#e81010" text-anchor="start" textLength="16.3" lengthAdjust="spacingAndGlyphs" stroke="#e81010" stroke-width=".2">140.0</text><text x="1348.1" y="525.9" font-size="10" fill="#e81010" text-anchor="start" textLength="16.3" lengthAdjust="spacingAndGlyphs" stroke="#e81010" stroke-width=".2">150.0</text><text x="1407.1" y="525.9" font-size="10" fill="#e81010" text-anchor="start" textLength="16.3" lengthAdjust="spacingAndGlyphs" stroke="#e81010" stroke-width=".2">160.0</text><rect x="1428" y="495" width="13.4" height="10.5" fill="#3a1414"/><text x="1429.5" y="503.6" font-size="8.5" fill="#ff1010" text-anchor="start" textLength="11" lengthAdjust="spacingAndGlyphs" >Х,м</text><path d="M1095 540.4 H1513.3 M1095 575.2 H1513.3 M1095 610.7 H1513.3 M1114.9 540.4 V610.7 M1127.7 540.4 V610.7 M1133.8 540.4 V610.7 M1159.6 540.4 V610.7 M1216.8 540.4 V610.7 M1264.8 540.4 V610.7 M1318.8 540.4 V610.7 M1336.6 540.4 V610.7 M1364.1 540.4 V610.7 M1369.6 540.4 V610.7 M1402.5 540.4 V610.7 M1406.3 540.4 V610.7 M1411.7 540.4 V610.7 M1442.1 540.4 V610.7 M1513.3 540.4 V610.7 " stroke="#8a1cb8" stroke-width="1.1" fill="none"/><path d="M1159.6 540.4 V610.7" stroke="#8a1cb8" stroke-width="2"/><text transform="translate(1100.8 558) rotate(-90)" font-size="8.1" fill="#a628dc" text-anchor="middle" textLength="22" lengthAdjust="spacingAndGlyphs">369.074</text><text transform="translate(1124.1 558) rotate(-90)" font-size="8.1" fill="#a628dc" text-anchor="middle" textLength="22" lengthAdjust="spacingAndGlyphs">369.676</text><text transform="translate(1149.8 558) rotate(-90)" font-size="8.1" fill="#a628dc" text-anchor="middle" textLength="22" lengthAdjust="spacingAndGlyphs">367.976</text><text transform="translate(1190.8 558) rotate(-90)" font-size="8.1" fill="#a628dc" text-anchor="middle" textLength="22" lengthAdjust="spacingAndGlyphs">368.736</text><text transform="translate(1243.8 558) rotate(-90)" font-size="8.1" fill="#a628dc" text-anchor="middle" textLength="22" lengthAdjust="spacingAndGlyphs">369.976</text><text transform="translate(1294.8 558) rotate(-90)" font-size="8.1" fill="#a628dc" text-anchor="middle" textLength="22" lengthAdjust="spacingAndGlyphs">370.944</text><text transform="translate(1330.3 558) rotate(-90)" font-size="8.1" fill="#a628dc" text-anchor="middle" textLength="22" lengthAdjust="spacingAndGlyphs">371.106</text><text transform="translate(1353.3 558) rotate(-90)" font-size="8.1" fill="#a628dc" text-anchor="middle" textLength="22" lengthAdjust="spacingAndGlyphs">371.144</text><text transform="translate(1388.8 558) rotate(-90)" font-size="8.1" fill="#a628dc" text-anchor="middle" textLength="22" lengthAdjust="spacingAndGlyphs">369.729</text><text transform="translate(1429.8 558) rotate(-90)" font-size="8.1" fill="#a628dc" text-anchor="middle" textLength="22" lengthAdjust="spacingAndGlyphs">370.994</text><text transform="translate(1480.8 558) rotate(-90)" font-size="8.1" fill="#a628dc" text-anchor="middle" textLength="22" lengthAdjust="spacingAndGlyphs">375.087</text><text transform="translate(1100.8 593) rotate(-90)" font-size="8.1" fill="#a628dc" text-anchor="middle" textLength="9.9" lengthAdjust="spacingAndGlyphs">0.0</text><text transform="translate(1124.1 593) rotate(-90)" font-size="8.1" fill="#a628dc" text-anchor="middle" textLength="16.5" lengthAdjust="spacingAndGlyphs">1.974</text><text transform="translate(1149.8 593) rotate(-90)" font-size="8.1" fill="#a628dc" text-anchor="middle" textLength="16.5" lengthAdjust="spacingAndGlyphs">4.495</text><text transform="translate(1190.8 593) rotate(-90)" font-size="8.1" fill="#a628dc" text-anchor="middle" textLength="16.5" lengthAdjust="spacingAndGlyphs">9.416</text><text transform="translate(1243.8 593) rotate(-90)" font-size="8.1" fill="#a628dc" text-anchor="middle" textLength="9.9" lengthAdjust="spacingAndGlyphs">8.2</text><text transform="translate(1294.8 593) rotate(-90)" font-size="8.1" fill="#a628dc" text-anchor="middle" textLength="13.2" lengthAdjust="spacingAndGlyphs">9.15</text><text transform="translate(1330.3 593) rotate(-90)" font-size="8.1" fill="#a628dc" text-anchor="middle" textLength="16.5" lengthAdjust="spacingAndGlyphs">3.031</text><text transform="translate(1353.3 593) rotate(-90)" font-size="8.1" fill="#a628dc" text-anchor="middle" textLength="16.5" lengthAdjust="spacingAndGlyphs">4.757</text><text transform="translate(1388.8 593) rotate(-90)" font-size="8.1" fill="#a628dc" text-anchor="middle" textLength="9.9" lengthAdjust="spacingAndGlyphs">5.7</text><text transform="translate(1429.8 593) rotate(-90)" font-size="8.1" fill="#a628dc" text-anchor="middle" textLength="16.5" lengthAdjust="spacingAndGlyphs">5.116</text><text transform="translate(1160.8 558) rotate(-90)" font-size="7.6" fill="#a628dc" text-anchor="middle" textLength="22" lengthAdjust="spacingAndGlyphs">368.096</text><text transform="translate(1160.8 593) rotate(-90)" font-size="7.6" fill="#a628dc" text-anchor="middle" textLength="16" lengthAdjust="spacingAndGlyphs">0.236</text><text transform="translate(1133.3 558) rotate(-90)" font-size="6.1" fill="#a628dc" text-anchor="middle" textLength="12" lengthAdjust="spacingAndGlyphs">370.17</text><text transform="translate(1133.3 593) rotate(-90)" font-size="6.1" fill="#a628dc" text-anchor="middle" textLength="9" lengthAdjust="spacingAndGlyphs">0.89</text><rect x="1365.5" y="554" width="3" height="6" fill="none" stroke="#8a1cb8" stroke-width="1"/><rect x="1365.5" y="589" width="3" height="5" fill="none" stroke="#8a1cb8" stroke-width="1"/><path d="M1408.8 552 v12 M1408.8 588 v8" stroke="#8a1cb8" stroke-width="2.2" stroke-dasharray="2 1.5"/><path d="M1141.5 159 L1181.5 326 M1151 164 L1185.8 312" stroke="#fff" stroke-width="1.3" fill="none"/><polyline points="1141.5,159 1151.92,167.895 1143.61,167.789 1153.75,175.684 1145.71,176.579 1155.58,183.474 1147.82,185.368 1157.41,191.263 1149.92,194.158 1159.24,199.053 1152.03,202.947 1161.07,206.842 1154.13,211.737 1162.91,214.632 1156.24,220.526 1164.74,222.421 1158.34,229.316 1166.57,230.211 1160.45,238.105 1168.4,238 1162.55,246.895 1170.23,245.789 1164.66,255.684 1172.06,253.579 1166.76,264.474 1173.89,261.368 1168.87,273.263 1175.73,269.158 1170.97,282.053 1177.56,276.947 1173.08,290.842 1179.39,284.737 1175.18,299.632 1181.22,292.526 1177.29,308.421 1183.05,300.316 1179.39,317.211 1184.88,308.105 1181.5,326" stroke="#fff" stroke-width="1" fill="none"/><polyline points="1151,164 1142.55,163.395 1152.83,171.789 1144.66,172.184 1154.66,179.579 1146.76,180.974 1156.49,187.368 1148.87,189.763 1158.33,195.158 1150.97,198.553 1160.16,202.947 1153.08,207.342 1161.99,210.737 1155.18,216.132 1163.82,218.526 1157.29,224.921 1165.65,226.316 1159.39,233.711 1167.48,234.105 1161.5,242.5 1169.32,241.895 1163.61,251.289 1171.15,249.684 1165.71,260.079 1172.98,257.474 1167.82,268.868 1174.81,265.263 1169.92,277.658 1176.64,273.053 1172.03,286.447 1178.47,280.842 1174.13,295.237 1180.31,288.632 1176.24,304.026 1182.14,296.421 1178.34,312.816 1183.97,304.211 1180.45,321.605 1185.8,312" stroke="#fff" stroke-width=".9" fill="none" opacity=".85"/><path d="M1140 156.3 L1153.7 161.4 L1146 166 Z" stroke="#fff" stroke-width="1.2" fill="none"/><path d="M1147 163 V271.5" stroke="#fff" stroke-width="1"/><circle cx="1147" cy="274" r="2.3" fill="none" stroke="#fff" stroke-width="1"/><circle cx="1147" cy="278.5" r="1.8" fill="none" stroke="#fff" stroke-width="1"/><path d="M1147 281 L1141.4 302.5 M1147 281 L1151.6 302.5" stroke="#fff" stroke-width="1"/><path d="M1140.6 303.3 H1152.4" stroke="#fff" stroke-width="2"/><rect x="1140" y="304.5" width="14" height="32.3" fill="#0a0ac8"/><path d="M1147 306 V336" stroke="#e01010" stroke-width="1"/><rect x="1132.6" y="307.3" width="7.4" height="28.4" fill="#eef000"/><polyline points="1133.8,308.5 1138.8,312.9 1133.8,317.3 1138.8,321.7 1133.8,326.1 1138.8,330.5 1133.8,334.9" stroke="#4a4a10" stroke-width=".9" fill="none"/><polyline points="1133.8,308.5 1138.8,312.9 1133.8,317.3 1138.8,321.7 1133.8,326.1 1138.8,330.5 1133.8,334.9" stroke="#4a4a10" stroke-width=".9" fill="none" transform="translate(2272.6 0) scale(-1 1)"/><rect x="1154.3" y="307.3" width="7.4" height="28.4" fill="#eef000"/><polyline points="1155.5,308.5 1160.5,312.9 1155.5,317.3 1160.5,321.7 1155.5,326.1 1160.5,330.5 1155.5,334.9" stroke="#4a4a10" stroke-width=".9" fill="none"/><polyline points="1155.5,308.5 1160.5,312.9 1155.5,317.3 1160.5,321.7 1155.5,326.1 1160.5,330.5 1155.5,334.9" stroke="#4a4a10" stroke-width=".9" fill="none" transform="translate(2316 0) scale(-1 1)"/><path d="M1184 321 V309 Q1184 305.6 1188 305.6 H1207 L1213.5 303.5 L1214.8 306 V321 Z" fill="#e9e9e9" stroke="#fff" stroke-width="1"/><path d="M1188 309 H1197 M1188 312.5 H1197 M1200 308 V320 M1203.5 308 V320 M1207 308 V320 M1210.5 308 V320 M1190 316 H1197" stroke="#444" stroke-width=".8"/><rect x="1183.4" y="321.8" width="32" height="4.6" rx="2" fill="none" stroke="#fff" stroke-width="1.3"/><rect x="1189" y="326.5" width="19" height="3.6" fill="#f4f4f4"/><path d="M1192.8 307 V331" stroke="#e01010" stroke-width="1" stroke-dasharray="2.5 1.5"/><path d="M1372.7 156 L1351.4 305.5 M1381 160 L1354.2 318" stroke="#fff" stroke-width="1.3" fill="none"/><polyline points="1372.7,156 1380.26,164.389 1371.52,164.306 1378.77,173.167 1370.33,172.611 1377.28,181.944 1369.15,180.917 1375.79,190.722 1367.97,189.222 1374.3,199.5 1366.78,197.528 1372.81,208.278 1365.6,205.833 1371.32,217.056 1364.42,214.139 1369.83,225.833 1363.23,222.444 1368.34,234.611 1362.05,230.75 1366.86,243.389 1360.87,239.056 1365.37,252.167 1359.68,247.361 1363.88,260.944 1358.5,255.667 1362.39,269.722 1357.32,263.972 1360.9,278.5 1356.13,272.278 1359.41,287.278 1354.95,280.583 1357.92,296.056 1353.77,288.889 1356.43,304.833 1352.58,297.194 1354.94,313.611 1351.4,305.5" stroke="#fff" stroke-width="1" fill="none"/><polyline points="1381,160 1372.11,160.153 1379.51,168.778 1370.92,168.458 1378.02,177.556 1369.74,176.764 1376.53,186.333 1368.56,185.069 1375.04,195.111 1367.38,193.375 1373.56,203.889 1366.19,201.681 1372.07,212.667 1365.01,209.986 1370.58,221.444 1363.83,218.292 1369.09,230.222 1362.64,226.597 1367.6,239 1361.46,234.903 1366.11,247.778 1360.28,243.208 1364.62,256.556 1359.09,251.514 1363.13,265.333 1357.91,259.819 1361.64,274.111 1356.73,268.125 1360.16,282.889 1355.54,276.431 1358.67,291.667 1354.36,284.736 1357.18,300.444 1353.18,293.042 1355.69,309.222 1351.99,301.347 1354.2,318" stroke="#fff" stroke-width=".9" fill="none" opacity=".85"/><path d="M1387.7 150 L1372.7 155 L1381.5 159.5 Z" stroke="#fff" stroke-width="1.2" fill="none"/><path d="M1381.5 160 V278" stroke="#fff" stroke-width="1"/><circle cx="1381.5" cy="280.5" r="2.3" fill="none" stroke="#fff" stroke-width="1"/><circle cx="1381.5" cy="285" r="1.8" fill="none" stroke="#fff" stroke-width="1"/><path d="M1381.5 288 L1376.6 309.5 M1381.5 288 L1386.4 309.5" stroke="#fff" stroke-width="1"/><path d="M1375.8 310.2 H1387.2" stroke="#fff" stroke-width="2"/><path d="M1350.8 320 V304 Q1350.8 300.5 1347 300.5 H1327 L1321 298.3 L1319.6 301 V320 Z" fill="#e9e9e9" stroke="#fff" stroke-width="1"/><path d="M1337 304 H1346 M1337 307.5 H1346 M1334 303 V315 M1330.5 303 V315 M1327 303 V315 M1323.5 303 V315 M1337 311 H1344" stroke="#444" stroke-width=".8"/><rect x="1318.6" y="316.5" width="32" height="4.6" rx="2" fill="none" stroke="#fff" stroke-width="1.3"/><rect x="1331" y="321" width="19" height="3.6" fill="#f4f4f4"/><path d="M1341.3 302 V326" stroke="#e01010" stroke-width="1" stroke-dasharray="2.5 1.5"/><path d="M1390.2 304 H1400.3 V329 H1371.5 V334.6 H1403 M1390.2 304 V310 L1381.5 325.5 H1400 M1394 310 V325" stroke="#1414d8" stroke-width="1.6" fill="none"/><path d="M1390 302.6 H1396" stroke="#d8d820" stroke-width="1.2"/><path d="M1364 328.4 H1373" stroke="#c8c820" stroke-width="1"/><path d="M1410.3 301 H1445.4 M1410.3 301 L1381.5 325.6 M1420.8 301 L1409 324.3" stroke="#f010f0" stroke-width="1.3" fill="none"/><path d="M1200.3 308.6 L1235.4 236.3 H1340.6" stroke="#9014bc" stroke-width="1.4" fill="none"/><path d="M1230.3 277.1 H1335.5 L1345.6 303.7" stroke="#9014bc" stroke-width="1.4" fill="none"/><text x="1240" y="235.2" font-size="12.5" fill="#ff0a0a" text-anchor="start" textLength="96.8" lengthAdjust="spacingAndGlyphs" stroke="#ff0a0a" stroke-width=".25">Кран гусеничный г/п 25т</text><text x="1274.3" y="247.3" font-size="11.5" fill="#ff0a0a" text-anchor="start" textLength="28.7" lengthAdjust="spacingAndGlyphs" stroke="#ff0a0a" stroke-width=".25">МКТ-25</text><text x="1235" y="276" font-size="12.5" fill="#ff0a0a" text-anchor="start" textLength="97" lengthAdjust="spacingAndGlyphs" stroke="#ff0a0a" stroke-width=".25">Кран гусеничный г/п 25т</text><text x="1268.8" y="288" font-size="11.5" fill="#ff0a0a" text-anchor="start" textLength="29" lengthAdjust="spacingAndGlyphs" stroke="#ff0a0a" stroke-width=".25">МКТ-25</text><g stroke="#707070" stroke-width="1" fill="none"><circle cx="1476.7" cy="216.5" r="66.4"/><circle cx="1476.7" cy="216.5" r="33.3"/><path d="M1410.3 216.5 H1543.1 M1476.7 150.1 V282.9"/></g><circle cx="1476.7" cy="216.5" r="4.5" fill="#a5744c"/><rect x="1454.2" y="283.7" width="43.4" height="11.8" rx="5.9" fill="#4f4f4f"/><text x="1461.2" y="293" font-size="9.3" fill="#a4a4a4" font-style="normal" textLength="28.6" lengthAdjust="spacingAndGlyphs">Сверху</text><g font-style="normal"><g stroke="#f2f2f2" stroke-width="1.3" fill="none"><rect x="345.5" y="728" width="19.3" height="19.2"/><path d="M355.3 675 V728 M364.8 737.5 H424.2"/><polygon points="424.2,731.5 446.8,737.5 424.2,744.2"/><path d="M460.2 732.6 L469.9 742.8 M469.9 732.6 L460.2 742.8"/></g><path d="M473.4 733 H1444" stroke="#e01010" stroke-width="1.2"/><polyline points="427.2,773 471.4,762.5 470.8,740 470.5,702.5 472,698 476,696.4 495,697.2 513.4,698.5" stroke="#1212d2" stroke-width="2.6" fill="none" transform="translate(1.2 1.2)"/><polyline points="427.2,773 471.4,762.5 470.8,740 470.5,702.5 472,698 476,696.4 495,697.2 513.4,698.5" stroke="#22d0d0" stroke-width="1.3" fill="none"/><rect x="482.3" y="718.2" width="20.7" height="28.6" fill="none" stroke="#22d0d0" stroke-width="1.3"/><path d="M492.5 720 V778 M537.4 705 V760" stroke="#e01010" stroke-width="1.2"/><polygon points="513.7,698.5 563.3,693.6 563.3,771.4 513.7,766.4" fill="none" stroke="#9c9c9c" stroke-width="1.2"/><rect x="521.6" y="705.4" width="32.4" height="54.1" fill="none" stroke="#9c9c9c" stroke-width="1.2"/><path d="M513.7 698.5 L521.6 705.4 M563.3 693.6 L554 705.4 M563.3 771.4 L554 759.5 M513.7 766.4 L521.6 759.5 M518.66 698.01 L522.059 702.074 M518.66 766.9 L522.059 762.83 M523.62 697.52 L528.08 705.4 M523.62 767.4 L528.08 759.5 M528.58 697.03 L530.087 701.634 M528.58 767.9 L530.087 763.28 M533.54 696.54 L534.56 705.4 M533.54 768.4 L534.56 759.5 M538.5 696.05 L538.115 701.192 M538.5 768.9 L538.115 763.73 M543.46 695.56 L541.04 705.4 M543.46 769.4 L541.04 759.5 M548.42 695.07 L546.143 700.751 M548.42 769.9 L546.143 764.18 M553.38 694.58 L547.52 705.4 M553.38 770.4 L547.52 759.5 M558.34 694.09 L554.171 700.311 M558.34 770.9 L554.171 764.63 M513.7 703.35 L518.045 706.603 M563.3 699.157 L558.185 704.716 M513.7 708.2 L521.6 713.129 M563.3 704.714 L554 713.129 M513.7 713.05 L518.045 715.219 M563.3 710.271 L558.185 713.968 M513.7 717.9 L521.6 720.857 M563.3 715.829 L554 720.857 M513.7 722.75 L518.045 723.834 M563.3 721.386 L558.185 723.22 M513.7 727.6 L521.6 728.586 M563.3 726.943 L554 728.586 M513.7 732.45 L518.045 732.45 M563.3 732.5 L558.185 732.472 M513.7 737.3 L521.6 736.314 M563.3 738.057 L554 736.314 M513.7 742.15 L518.045 741.066 M563.3 743.614 L558.185 741.725 M513.7 747 L521.6 744.043 M563.3 749.171 L554 744.043 M513.7 751.85 L518.045 749.681 M563.3 754.729 L558.185 750.977 M513.7 756.7 L521.6 751.771 M563.3 760.286 L554 751.771 M513.7 761.55 L518.045 758.297 M563.3 765.843 L558.185 760.229 " stroke="#9c9c9c" stroke-width="1"/><path d="M563.3 771 V778" stroke="#1212d2" stroke-width="2.2"/><polyline points="600,777.9 660,764 709.2,750.3 713.8,737 712.3,715 711.2,699.5 714,693.5 720,690.7 729,693.2 746.6,690.7 755.5,693.2" stroke="#1212d2" stroke-width="2.6" fill="none" transform="translate(1.3 1.6)"/><path d="M600 777.9 L600.903 781.797 M606.819 776.32 L607.316 778.463 M613.639 774.74 L614.542 778.637 M620.458 773.161 L620.955 775.304 M627.278 771.581 L628.18 775.477 M634.097 770.001 L634.593 772.144 M640.916 768.421 L641.819 772.318 M647.736 766.841 L648.232 768.984 M654.555 765.261 L655.458 769.158 M661.359 763.622 L661.949 765.741 M668.103 761.744 L669.176 765.597 M674.846 759.866 L675.436 761.985 M681.59 757.988 L682.663 761.842 M688.333 756.111 L688.923 758.23 M695.076 754.233 L696.149 758.086 M701.82 752.355 L702.41 754.474 M708.563 750.477 L709.636 754.331 M711.272 744.309 L713.351 745.028 M713.56 737.694 L717.34 739.001 M713.374 730.748 L715.569 730.599 M712.898 723.765 L716.888 723.493 M712.421 716.781 L714.616 716.631 " stroke="#f4f4f4" stroke-width="1.2"/><polyline points="600,777.9 660,764 709.2,750.3 713.8,737 712.3,715 711.2,699.5 714,693.5 720,690.7 729,693.2 746.6,690.7 755.5,693.2" stroke="#22d0d0" stroke-width="1.3" fill="none"/><rect x="723" y="718.2" width="20.7" height="28.6" fill="none" stroke="#22d0d0" stroke-width="1.3"/><path d="M733.4 720 V769.4 M754.5 765.8 L696.4 778" stroke="#e01010" stroke-width="1.2"/><polygon points="754.5,692.6 800.2,689.7 800.2,773.3 754.5,771.4" fill="none" stroke="#9c9c9c" stroke-width="1.2"/><rect x="764.3" y="698.5" width="25.7" height="67.9" fill="none" stroke="#9c9c9c" stroke-width="1.2"/><path d="M754.5 692.6 L764.3 698.5 M800.2 689.7 L790 698.5 M800.2 773.3 L790 766.4 M754.5 771.4 L764.3 766.4 M759.578 692.278 L763.746 695.7 M759.578 771.611 L763.746 768.745 M764.656 691.956 L770.011 698.5 M764.656 771.822 L770.011 766.4 M769.733 691.633 L771.457 695.41 M769.733 772.033 L771.457 768.935 M774.811 691.311 L775.722 698.5 M774.811 772.244 L775.722 766.4 M779.889 690.989 L779.168 695.12 M779.889 772.456 L779.168 769.125 M784.967 690.667 L781.433 698.5 M784.967 772.667 L781.433 766.4 M790.044 690.344 L786.879 694.83 M790.044 772.878 L786.879 769.315 M795.122 690.022 L787.144 698.5 M795.122 773.089 L787.144 766.4 M754.5 697.525 L759.89 700.395 M800.2 694.925 L794.59 699.225 M754.5 702.45 L764.3 706.987 M800.2 700.15 L790 706.987 M754.5 707.375 L759.89 709.496 M800.2 705.375 L794.59 708.596 M754.5 712.3 L764.3 715.475 M800.2 710.6 L790 715.475 M754.5 717.225 L759.89 718.597 M800.2 715.825 L794.59 717.967 M754.5 722.15 L764.3 723.962 M800.2 721.05 L790 723.962 M754.5 727.075 L759.89 727.697 M800.2 726.275 L794.59 727.337 M754.5 732 L764.3 732.45 M800.2 731.5 L790 732.45 M754.5 736.925 L759.89 736.798 M800.2 736.725 L794.59 736.708 M754.5 741.85 L764.3 740.938 M800.2 741.95 L790 740.938 M754.5 746.775 L759.89 745.898 M800.2 747.175 L794.59 746.078 M754.5 751.7 L764.3 749.425 M800.2 752.4 L790 749.425 M754.5 756.625 L759.89 754.999 M800.2 757.625 L794.59 755.449 M754.5 761.55 L764.3 757.913 M800.2 762.85 L790 757.913 M754.5 766.475 L759.89 764.1 M800.2 768.075 L794.59 764.82 " stroke="#9c9c9c" stroke-width="1"/><polygon points="774.3,701 780.5,701 787,709.45 787,755.55 780.5,764 774.3,764 767.8,755.55 767.8,709.45" fill="none" stroke="#1212d2" stroke-width="3"/><path d="M785 776.5 H798" stroke="#1212d2" stroke-width="2.4"/><polyline points="829.3,675 829.456,677.207 829.648,680.285 829.887,683.919 830.185,687.793 830.552,691.591 831,695 831.491,698.116 832.007,701.211 832.594,704.231 833.293,707.122 834.147,709.83 835.2,712.3 836.52,714.473 838.085,716.381 839.806,718.106 841.593,719.73 843.354,721.334 845,723 846.615,724.663 848.289,726.244 849.938,727.806 851.478,729.411 852.826,731.122 853.9,733 854.747,735.064 855.444,737.267 855.95,739.575 856.222,741.956 856.219,744.375 855.9,746.8 855.213,749.243 854.181,751.733 852.875,754.262 851.363,756.822 849.715,759.404 848,762 846.002,764.806 843.622,767.867 841.106,770.95 838.7,773.822 836.649,776.25 835.2,778" stroke="#f2f2f2" stroke-width="1.3" fill="none"/><path d="M829.3 675 L835.784 674.542 M829.592 679.39 L833.16 679.168 M829.878 683.781 L833.446 683.546 M830.221 688.167 L833.78 687.824 M830.677 692.543 L834.222 692.078 M831.299 696.899 L834.83 696.343 M832.013 701.24 L835.523 700.559 M832.912 705.547 L836.387 704.707 M834.129 709.773 L837.538 708.697 M836.059 713.714 L839.115 711.859 M838.823 717.12 L841.353 714.595 M842.031 720.129 L844.438 717.486 M845.187 723.193 L847.752 720.702 M848.324 726.277 L850.782 723.682 M851.445 729.377 L854.024 726.901 M853.904 733.01 L857.211 731.652 M855.405 737.142 L858.813 736.063 M856.167 741.469 L859.718 741.063 M856.025 745.853 L859.569 746.32 M854.866 750.081 L858.169 751.449 M852.983 754.054 L856.159 755.694 M850.722 757.827 L853.735 759.751 M848.321 761.514 L851.304 763.485 M845.773 765.1 L848.595 767.295 M843.056 768.561 L845.826 770.821 M840.261 771.959 L843.001 774.255 M837.429 775.327 L840.16 777.634 " stroke="#f2f2f2" stroke-width="1.1"/><polyline points="841,675 841.751,677.674 842.781,681.333 844.006,685.688 845.341,690.444 846.7,695.312 848,700 849.297,704.752 850.67,709.852 852.069,715.062 853.441,720.148 854.735,724.873 855.9,729 856.94,732.402 857.896,735.241 858.775,737.719 859.581,740.037 860.321,742.397 861,745 861.632,747.853 862.215,750.796 862.731,753.781 863.163,756.759 863.492,759.682 863.7,762.5 863.736,765.378 863.604,768.389 863.369,771.344 863.096,774.056 862.852,776.337 862.7,778" stroke="#22d0d0" stroke-width="1.2" fill="none"/><polyline points="1117.9,640 1118.2,641.306 1118.6,643.111 1119.08,645.25 1119.64,647.556 1120.28,649.861 1121,652 1121.87,654.041 1122.91,656.13 1124.03,658.219 1125.14,660.259 1126.16,662.203 1127,664 1127.72,665.661 1128.39,667.226 1128.97,668.694 1129.41,670.063 1129.67,671.332 1129.7,672.5 1129.51,673.577 1129.14,674.567 1128.59,675.456 1127.86,676.233 1126.93,676.885 1125.8,677.4 1124.38,677.743 1122.64,677.919 1120.72,677.969 1118.72,677.937 1116.78,677.866 1115,677.8 1113.29,677.703 1111.53,677.533 1109.83,677.325 1108.27,677.111 1106.96,676.925 1106,676.8" stroke="#f2f2f2" stroke-width="1.3" fill="none"/><path d="M1117.9 640 L1113.52 641.02 M1118.82 644.099 L1116.4 644.639 M1119.81 648.179 L1117.43 648.843 M1121.08 652.181 L1118.8 653.152 M1122.84 655.992 L1120.62 657.092 M1124.83 659.691 L1122.65 660.875 M1126.73 663.432 L1124.49 664.483 M1128.41 667.282 L1126.11 668.192 M1129.66 671.281 L1127.23 671.776 M1128.71 675.273 L1126.6 673.97 M1125.28 677.527 L1124.69 675.121 M1121.11 677.959 L1121.05 675.484 M1116.91 677.871 L1117 675.398 " stroke="#f2f2f2" stroke-width="1.1"/><polyline points="1117.5,641 1117.04,643.097 1116.43,646.022 1115.69,649.475 1114.85,653.156 1113.95,656.764 1113,660 1112.06,662.824 1111.11,665.467 1110.09,668.037 1108.94,670.644 1107.6,673.396 1106,676.4 1104.05,679.709 1101.8,683.248 1099.34,686.931 1096.81,690.674 1094.33,694.392 1092,698 1089.8,701.576 1087.63,705.204 1085.5,708.806 1083.43,712.307 1081.42,715.631 1079.5,718.7 1077.59,721.515 1075.68,724.137 1073.83,726.581 1072.13,728.863 1070.66,730.997 1069.5,733 1068.68,734.772 1068.15,736.281 1067.85,737.644 1067.71,738.974 1067.69,740.388 1067.7,742 1067.74,743.826 1067.85,745.778 1068.07,747.812 1068.43,749.889 1068.96,751.965 1069.7,754 1070.68,756.002 1071.89,758.007 1073.26,760.012 1074.77,762.015 1076.36,764.012 1078,766 1079.85,768.115 1081.99,770.385 1084.22,772.65 1086.33,774.748 1088.12,776.519 1089.4,777.8" stroke="#f2f2f2" stroke-width="1.3" fill="none" transform="translate(1.5 0.5)"/><path d="M1069.21 739.474 L1074.21 739.579 M1069.23 743.673 L1071.98 743.612 M1069.52 747.861 L1072.26 747.57 M1070.33 751.977 L1073 751.294 M1071.87 755.873 L1074.34 754.662 M1074.04 759.465 L1076.31 757.908 M1076.53 762.845 L1078.68 761.129 M1079.18 766.108 L1081.3 764.361 M1081.96 769.256 L1083.96 767.37 M1084.87 772.284 L1086.83 770.356 M1087.84 775.255 L1089.77 773.297 M1090.82 778.215 L1092.76 776.275 " stroke="#f2f2f2" stroke-width="1.1"/><polyline points="1117.5,641 1117.04,643.097 1116.43,646.022 1115.69,649.475 1114.85,653.156 1113.95,656.764 1113,660 1112.06,662.824 1111.11,665.467 1110.09,668.037 1108.94,670.644 1107.6,673.396 1106,676.4 1104.05,679.709 1101.8,683.248 1099.34,686.931 1096.81,690.674 1094.33,694.392 1092,698 1089.8,701.576 1087.63,705.204 1085.5,708.806 1083.43,712.307 1081.42,715.631 1079.5,718.7 1077.59,721.515 1075.68,724.137 1073.83,726.581 1072.13,728.863 1070.66,730.997 1069.5,733 1068.68,734.772 1068.15,736.281 1067.85,737.644 1067.71,738.974 1067.69,740.388 1067.7,742 1067.74,743.826 1067.85,745.778 1068.07,747.812 1068.43,749.889 1068.96,751.965 1069.7,754 1070.68,756.002 1071.89,758.007 1073.26,760.012 1074.77,762.015 1076.36,764.012 1078,766 1079.85,768.115 1081.99,770.385 1084.22,772.65 1086.33,774.748 1088.12,776.519 1089.4,777.8" stroke="#22d0d0" stroke-width="1.2" fill="none"/><polygon points="1124.8,690.6 1164.5,693 1164.5,770.9 1124.8,774.8" fill="none" stroke="#9c9c9c" stroke-width="1.2"/><rect x="1133.6" y="698.5" width="25.6" height="68.5" fill="none" stroke="#9c9c9c" stroke-width="1.2"/><path d="M1124.8 690.6 L1133.6 698.5 M1164.5 693 L1159.2 698.5 M1164.5 770.9 L1159.2 767 M1124.8 774.8 L1133.6 767 M1129.76 690.9 L1133.63 695.08 M1129.76 774.312 L1133.63 770.291 M1134.72 691.2 L1140 698.5 M1134.72 773.825 L1140 767 M1139.69 691.5 L1141.62 695.35 M1139.69 773.337 L1141.62 769.852 M1144.65 691.8 L1146.4 698.5 M1144.65 772.85 L1146.4 767 M1149.61 692.1 L1149.61 695.62 M1149.61 772.362 L1149.61 769.413 M1154.58 692.4 L1152.8 698.5 M1154.58 771.875 L1152.8 767 M1159.54 692.7 L1157.59 695.89 M1159.54 771.387 L1157.59 768.974 M1124.8 695.863 L1129.64 699.668 M1164.5 697.869 L1161.59 700.571 M1124.8 701.125 L1133.6 707.062 M1164.5 702.737 L1159.2 707.062 M1124.8 706.388 L1129.64 709.113 M1164.5 707.606 L1161.59 709.662 M1124.8 711.65 L1133.6 715.625 M1164.5 712.475 L1159.2 715.625 M1124.8 716.913 L1129.64 718.559 M1164.5 717.344 L1161.59 718.753 M1124.8 722.175 L1133.6 724.188 M1164.5 722.212 L1159.2 724.188 M1124.8 727.438 L1129.64 728.005 M1164.5 727.081 L1161.59 727.844 M1124.8 732.7 L1133.6 732.75 M1164.5 731.95 L1159.2 732.75 M1124.8 737.962 L1129.64 737.45 M1164.5 736.819 L1161.59 736.936 M1124.8 743.225 L1133.6 741.312 M1164.5 741.688 L1159.2 741.312 M1124.8 748.487 L1129.64 746.896 M1164.5 746.556 L1161.59 746.027 M1124.8 753.75 L1133.6 749.875 M1164.5 751.425 L1159.2 749.875 M1124.8 759.012 L1129.64 756.342 M1164.5 756.294 L1161.59 755.118 M1124.8 764.275 L1133.6 758.438 M1164.5 761.163 L1159.2 758.438 M1124.8 769.537 L1129.64 765.787 M1164.5 766.031 L1161.59 764.209 " stroke="#9c9c9c" stroke-width="1"/><polygon points="1142.2,700.5 1150.8,700.5 1156.8,708.3 1156.8,757.2 1150.8,765 1142.2,765 1136.2,757.2 1136.2,708.3" fill="none" stroke="#1212d2" stroke-width="2.2"/><polygon points="1144.1,704.5 1148.9,704.5 1153.4,710.35 1153.4,755.15 1148.9,761 1144.1,761 1139.6,755.15 1139.6,710.35" fill="none" stroke="#1212d2" stroke-width="1.6"/><path d="M1164.5 699 H1176 M1164.5 704.4 H1171 M1164.5 709.8 H1176 M1164.5 715.2 H1171 M1164.5 720.6 H1176 M1164.5 726 H1171 M1164.5 731.4 H1176 M1164.5 736.8 H1171 M1164.5 742.2 H1176 M1164.5 747.6 H1171 M1164.5 753 H1176 M1164.5 758.4 H1171 M1164.5 763.8 H1176 M1164.5 769.2 H1171 " stroke="#f2f2f2" stroke-width="1.2"/><polyline points="1177.5,772 1177.5,697 1180,694 1213.4,694 1218.9,699 1218.9,736.4 1226,739.4 1322.5,739.4 1322.5,707 1325,700.5 1331,697.2 1370,697.2" stroke="#1212d2" stroke-width="2.4" fill="none"/><path d="M1178 685.7 L1178 690.2 M1183.5 685.7 L1183.5 688.175 M1189 685.7 L1189 690.2 M1194.5 685.7 L1194.5 688.175 M1200 685.7 L1200 690.2 M1205.5 685.7 L1205.5 688.175 M1211 685.7 L1211 690.2 M1216.25 687.272 L1215.49 689.626 M1220.33 690.55 L1218.32 691.991 M1222.74 695.254 L1220.27 695.132 M1222.47 700.747 L1217.97 700.526 M1222.2 706.24 L1219.73 706.119 M1221.93 711.734 L1217.44 711.513 M1221.66 717.227 L1219.19 717.106 M1221.39 722.72 L1216.9 722.5 M1220.78 728.161 L1218.39 727.519 M1219.35 733.472 L1215.01 732.305 " stroke="#f2f2f2" stroke-width="1.2"/><path d="M1319.6 705 L1323.82 706.559 M1321.51 699.84 L1323.83 700.698 M1325.49 696.405 L1326.76 698.528 M1330.32 693.906 L1330.6 696.365 M1335.78 693.28 L1336.3 697.75 M1341.25 692.653 L1341.53 695.112 M1346.72 692.315 L1346.53 694.783 M1352.2 692.728 L1351.86 697.216 M1357.69 693.142 L1357.5 695.61 M1363.17 693.556 L1362.83 698.044 M1368.66 693.97 L1368.47 696.438 " stroke="#f2f2f2" stroke-width="1.2"/><polyline points="1164.5,693 1170,687.2 1178,685.7 1211.4,685.7 1218.5,688 1222.8,694 1221.2,726.6 1218.3,737.4 1246.8,738 1321.2,738 1319.6,705 1322,698.5 1329.5,694 1345.2,692.2 1371.7,694.2" stroke="#22d0d0" stroke-width="1.3" fill="none"/><path d="M1322.5 739 V746.5" stroke="#1212d2" stroke-width="2"/><path d="M1125 775.2 H1322.6" stroke="#1212d2" stroke-width="2.6"/><path d="M1125 774.6 H1322.6" stroke="#2a8cf0" stroke-width="1"/><rect x="1188.4" y="715.2" width="20" height="28.7" fill="none" stroke="#22d0d0" stroke-width="1.3"/><rect x="1331.4" y="715.2" width="20.3" height="28.7" fill="none" stroke="#22d0d0" stroke-width="1.3"/><path d="M1198.6 715.5 V756.5 H1341.3 V715.5 M1313.7 756.5 Q1337 758 1343 778" stroke="#e01010" stroke-width="1.2" fill="none"/><rect x="1371" y="706" width="30.5" height="52.5" fill="#1414c8" opacity=".8"/><path d="M1372 694 L1376 703 M1380 690 L1385 703 M1390 687 L1391 704 M1396 686.5 L1396 696 M1401.5 686 L1402 704 M1411.7 686 L1403 704 M1423 691 L1417 697 M1445 700 L1404 706 M1372 768 L1376 761 M1381 771 L1383 761 M1390 773 L1392 761 M1397 772 L1397 765 M1403 771.5 L1402.5 761 M1417 770.5 L1404 761 M1429 765 L1417 761 M1445 758.5 L1404 752 M1445 709 H1424 M1445 716.5 H1403.5 M1445 723.5 H1424 M1445 729.5 H1403.5 M1445 737 H1424 M1445 743.5 H1403.5 M1445 750 H1424 M1363 706 H1366 M1363 711.2 H1369 M1363 716.4 H1366 M1363 721.6 H1369 M1363 726.8 H1366 M1363 732 H1369 M1363 737.2 H1366 M1363 742.4 H1369 M1363 747.6 H1366 M1363 752.8 H1369 M1363 758 H1366 " stroke="#f2f2f2" stroke-width="1.2"/><polygon points="1362.5,700 1375,691.7 1390,686.7 1411.7,685.8 1445.8,700 1445.8,758.3 1417.5,770.8 1390,773.3 1362.5,765.8" fill="none" stroke="#22d0d0" stroke-width="1.3"/><rect x="1369.7" y="705" width="32.8" height="54.2" fill="none" stroke="#22d0d0" stroke-width="1.3"/><path d="M1374 707 V758 M1377.5 707 V758 M1391 716 V748 M1397 716 V748" stroke="#2b2b2b" stroke-width="1.2"/><rect x="1382.5" y="710.8" width="18.3" height="5.9" rx="2.5" fill="#d010c0" stroke="#ff30e0" stroke-width="1"/><rect x="1382.5" y="748.3" width="18.3" height="5.9" rx="2.5" fill="#d010c0" stroke="#ff30e0" stroke-width="1"/><path d="M1385.3 708 V757 M1371 732.8 H1444" stroke="#e01010" stroke-width="1.2"/><path d="M1362.5 766 Q1359 770 1358.5 778" stroke="#1212d2" stroke-width="2.4" fill="none"/><path d="M1364 766.5 Q1360.5 771 1360 778" stroke="#22d0d0" stroke-width="1" fill="none"/><path d="M1120.5 611 V628 Q1120 640 1118 642" stroke="#f2f2f2" stroke-width="1.2" fill="none"/><path d="M1120.5 613 h-3 M1120.5 618 h-3.5 M1120.5 623 h-3 M1120.5 628 h-3.5 M1120 633 h-3 M1119.5 638 h-3.5" stroke="#f2f2f2" stroke-width="1.1"/></g></g></svg>
<svg style="left:1545px;top:123px" width="10" height="8"><path d="M0.5 1 H9.5 L5 6.5 Z" fill="#e8e8e8"/></svg>
<!-- sec_bottom -->
<div class="a" style="left:315px;top:778px;width:1241px;height:1.5px;background:#6e6e6e;"></div>
<div class="a" style="left:315px;top:779.5px;width:1241px;height:15px;background:#4b4b4b;"></div>
<div class="a" style="left:0px;top:795.5px;width:1558px;height:4px;background:#4b4b4b;"></div>
<div class="a" style="left:313px;top:794.5px;width:1243px;height:2px;background:#6c6c6c;"></div>
<svg style="left:316px;top:779px" width="16" height="16" viewBox="0 0 16 16"><rect x="1" y="1.3" width="13" height="12.4" rx="2" fill="#383838" stroke="#a6a6a6" stroke-width="1"/><rect x="1.8" y="4.6" width="11.4" height="2.5" fill="#8ab6ea"/><rect x="1.8" y="9.6" width="11.4" height="1.5" fill="#9c9c9c"/></svg>
<div class="a" style="left:344px;top:779.6px;width:45px;height:13.4px;background:#7e7e7e;"></div>
<span class="t" style="left:350.60px;top:782.35px;font-size:9.3px;color:#ffffff;letter-spacing:-0.484px;font-weight:bold;">Модель</span>
<div class="a" style="left:389px;top:779.6px;width:168px;height:13.4px;box-sizing:border-box;border:1px solid #727272;border-left:none;background:#4b4b4b"></div>
<span class="t" style="left:397.20px;top:782.35px;font-size:9.3px;color:#c4c4c4;letter-spacing:0.106px;">Схема работ по сооружению опор</span>
<div class="a" style="left:1px;top:798.5px;width:1555px;height:59px;background:#5a5a5a;"></div>
<div class="a" style="left:1px;top:800.9px;width:14.6px;height:56.4px;background:#7a7a7a;"></div>
<div class="a" style="left:15.6px;top:843.2px;width:1541px;height:1px;background:#484848;"></div>
<div class="a" style="left:15.6px;top:844.2px;width:1541px;height:13.3px;background:#5c5c5c;"></div>
<svg style="left:0;top:797px" width="16" height="62" viewBox="0 797 16 62"><path d="M4.6 805.8 L11.8 813 M11.8 805.8 L4.6 813" stroke="#fff" stroke-width="1.4"/><path d="M6.6 822 H10.6 V826.2 H6.6 Z M5.4 826.4 H11.8 M8.6 826.6 V829.6" stroke="#f0f0f0" stroke-width="1.1" fill="none"/></svg>
<span class="t" style="left:4.2px;top:856.5px;font-size:8.6px;color:#d6d6d6;transform-origin:0 0;transform:rotate(-90deg);letter-spacing:-.45px">Коман</span>
<div class="a" style="left:15.6px;top:802.2px;width:1540px;height:7px;overflow:hidden">
<span class="t" style="left:2.9px;top:-3px;font-size:9.45px;color:#dcdcdc;font-family:'Liberation Mono',monospace">Укажите рамкой или [Все/Центр/Динамика/Границы/Предыдущий/Масштаб/Омасштаб/Рамка/Объект] &lt;В реальном времени&gt;: E</span>
</div>
<span class="t" style="left:18.60px;top:821.57px;font-size:9.45px;color:#dcdcdc;font-family:'Liberation Mono',monospace;">spppr - Менеджер проектов</span>
<span class="t" style="left:18.60px;top:832.77px;font-size:9.45px;color:#dcdcdc;font-family:'Liberation Mono',monospace;">Автосохранение: C:\Users\D9F8~1\AppData\Local\Temp\Дороги.dwg(D__Distr_..._Задание)(15-20-13_16.06.2023).autosave</span>
<span class="t" style="left:17.70px;top:846.48px;font-size:9.45px;color:#dcdcdc;font-family:'Liberation Mono',monospace;">Команда:</span>
<div class="a" style="left:0px;top:857.5px;width:1560px;height:18.3px;background:#4a4a4a;"></div>
<div class="a" style="left:0px;top:875.7px;width:1560px;height:1.3px;background:#e8e8e8;"></div>
<span class="t" style="left:3.80px;top:863.15px;font-size:9.3px;color:#e2e2e2;letter-spacing:-0.293px;">352506,284761,0</span>
<div class="a" style="left:153.8px;top:859px;width:64.2px;height:16px;box-sizing:border-box;background:#4d6487;border:1px solid #6a9fe0"></div>
<div class="a" style="left:218px;top:859px;width:77.6px;height:16px;box-sizing:border-box;background:#4d6487;border:1px solid #6a9fe0"></div>
<div class="a" style="left:295.6px;top:859px;width:69.9px;height:16px;box-sizing:border-box;background:#4d6487;border:1px solid #6a9fe0"></div>
<div class="a" style="left:365.5px;top:859px;width:64.3px;height:16px;box-sizing:border-box;background:#4d6487;border:1px solid #6a9fe0"></div>
<div class="a" style="left:597.6px;top:859px;width:66.4px;height:16px;box-sizing:border-box;background:#4d6487;border:1px solid #6a9fe0"></div>
<span class="t" style="left:88.50px;top:863.15px;font-size:9.3px;color:#e2e2e2;letter-spacing:-0.521px;">ШАГ</span>
<span class="t" style="left:121.20px;top:863.15px;font-size:9.3px;color:#e2e2e2;letter-spacing:-0.984px;">СЕТКА</span>
<span class="t" style="left:162.00px;top:863.15px;font-size:9.3px;color:#e2e2e2;letter-spacing:-0.644px;">оПРИВЯЗКА</span>
<span class="t" style="left:226.40px;top:863.15px;font-size:9.3px;color:#e2e2e2;letter-spacing:-0.580px;">3D оПРИВЯЗКА</span>
<span class="t" style="left:303.80px;top:863.15px;font-size:9.3px;color:#e2e2e2;letter-spacing:-0.722px;">ОТС-ОБЪЕКТ</span>
<span class="t" style="left:373.30px;top:863.15px;font-size:9.3px;color:#e2e2e2;letter-spacing:-0.651px;">ОТС-ПОЛЯР</span>
<span class="t" style="left:438.80px;top:863.15px;font-size:9.3px;color:#e2e2e2;letter-spacing:-0.904px;">ОРТО</span>
<span class="t" style="left:476.90px;top:863.15px;font-size:9.3px;color:#e2e2e2;letter-spacing:-0.190px;">ДИН-ВВОД</span>
<span class="t" style="left:538.40px;top:863.15px;font-size:9.3px;color:#e2e2e2;letter-spacing:-0.510px;">ИЗО</span>
<span class="t" style="left:575.10px;top:863.15px;font-size:9.3px;color:#e2e2e2;letter-spacing:-1.741px;">ВЕС</span>
<span class="t" style="left:605.70px;top:863.15px;font-size:9.3px;color:#e2e2e2;letter-spacing:-0.727px;">ШТРИХОВКА</span>
<span class="t" style="left:1073.60px;top:863.15px;font-size:9.3px;color:#e2e2e2;letter-spacing:-0.597px;">МОДЕЛЬ</span>
<span class="t" style="left:1315.00px;top:863.15px;font-size:9.3px;color:#e2e2e2;letter-spacing:-0.298px;">m1:500 (мм)</span>
<div class="a" style="left:79.5px;top:860px;width:1px;height:14px;background:#5e5e5e;"></div>
<div class="a" style="left:113.8px;top:860px;width:1px;height:14px;background:#5e5e5e;"></div>
<div class="a" style="left:468.8px;top:860px;width:1px;height:14px;background:#5e5e5e;"></div>
<div class="a" style="left:531.6px;top:860px;width:1px;height:14px;background:#5e5e5e;"></div>
<div class="a" style="left:564.4px;top:860px;width:1px;height:14px;background:#5e5e5e;"></div>
<div class="a" style="left:1111.5px;top:860px;width:1px;height:14px;background:#5e5e5e;"></div>
<div class="a" style="left:1128.8px;top:860px;width:1px;height:14px;background:#5e5e5e;"></div>
<div class="a" style="left:1375px;top:860px;width:1px;height:14px;background:#5e5e5e;"></div>
<svg style="left:0;top:0" width="1560" height="877" viewBox="0 0 1560 877"><g stroke="#d8d8d8" stroke-width="1.1" fill="none"><rect x="1115" y="867" width="5" height="4" rx="1.5"/><rect x="1120.5" y="863.5" width="5" height="4" rx="1.5"/><path d="M1119 868 L1122 866"/></g><rect x="1132" y="862" width="10" height="9" fill="#a8a8a8" stroke="#e0e0e0" stroke-width="1"/><path d="M1135.5 872 h5 l-2.5 2.6 z" fill="#e8e8e8"/><circle cx="1226" cy="864.5" r="3" fill="#f4e8a0"/><rect x="1224.8" y="867.3" width="2.4" height="2.2" fill="#ddd"/><rect x="1223" y="862" width="11.5" height="10.5" fill="none" stroke="#ddd" stroke-width=".9"/><path d="M1231 866 v7 l1.8 -1.6 l1.2 2.6 l1.1 -.5 l-1.2 -2.5 h2.3 z" fill="#fff"/><path d="M1246 861.5 Q1250.2 861.5 1250 866 Q1249.6 868.5 1248 870 V872.5 H1244 V870 Q1242.4 868.5 1242 866 Q1241.8 861.5 1246 861.5 Z" fill="#d6d6d6"/><rect x="1256" y="859.3" width="48" height="15.4" fill="#4d6487" stroke="#6a9fe0" stroke-width="1"/><path d="M1280 859.5 V874.5" stroke="#6a9fe0" stroke-width="1"/><circle cx="1270" cy="867" r="5.3" fill="none" stroke="#e03030" stroke-width="1.4"/><path d="M1266.3 863.3 L1273.7 870.7" stroke="#e03030" stroke-width="1.3"/><path d="M1268 863.5 L1272 870" stroke="#eee" stroke-width="1"/><path d="M1288.5 861 V872.5 H1300" stroke="#e8e8e8" stroke-width="1.1" fill="none"/><path d="M1296.5 861 L1293.6 866 H1295.6 L1294 870 L1298 864.8 H1296 L1297.8 861 Z" fill="#6aa5ec"/><path d="M1385 866 Q1384 863 1386 863.6 L1387.5 866.5 V861.8 Q1388.3 860.6 1389 861.8 V865.5 V861 Q1390 859.8 1390.8 861 V865.5 V861.6 Q1391.7 860.6 1392.5 861.8 V866 V863.2 Q1393.5 862.2 1394.2 863.4 V869 Q1394 873.5 1390.5 873.8 Q1387.5 873.8 1386.6 870.6 Z" fill="#f4f4f4"/><circle cx="1413.3" cy="865.8" r="4" fill="#9fc8f4" stroke="#e8f0fb" stroke-width="1.1"/><path d="M1416.3 869 L1420.5 873.3" stroke="#e0e0e0" stroke-width="1.8"/><rect x="1430.7" y="860.3" width="13.3" height="13.6" fill="#6aa5ec"/><circle cx="1436.5" cy="866" r="3.4" fill="none" stroke="#fff" stroke-width="1.2"/><path d="M1439 868.6 L1442 871.8" stroke="#fff" stroke-width="1.5"/><path d="M1455 871 V861.5 H1465.5 V865" stroke="#6aa5ec" stroke-width="1.2" fill="none"/><circle cx="1462" cy="868.5" r="3" fill="none" stroke="#eee" stroke-width="1.1"/><path d="M1464.2 870.8 L1467 873.6" stroke="#eee" stroke-width="1.4"/><ellipse cx="1484" cy="867.5" rx="6.5" ry="2.8" fill="none" stroke="#cfcfcf" stroke-width="1.1"/><path d="M1484 861 V874" stroke="#cfcfcf" stroke-width="1.1"/><path d="M1482 862.5 L1484 860.3 L1486 862.5" stroke="#cfcfcf" stroke-width="1" fill="none"/><path d="M1502 866 A5 5 0 0 1 1511 864 M1512 869 A5 5 0 0 1 1503 871" stroke="#58d838" stroke-width="1.8" fill="none"/><path d="M1511.8 861 V865.4 H1507.6 Z M1502.2 874 V869.6 H1506.4 Z" fill="#58d838"/><rect x="1519.5" y="861" width="9" height="7.5" fill="none" stroke="#e8e8e8" stroke-width="1.1"/><rect x="1519.5" y="861" width="9" height="2" fill="#e8e8e8"/><rect x="1525" y="868" width="7" height="5" fill="#e8e8e8"/><path d="M1526.6 868 v-1.6 q1.9 -1.8 3.8 0 v1.6" stroke="#e8e8e8" stroke-width="1" fill="none"/><rect x="1543" y="861.3" width="11.5" height="11.5" fill="none" stroke="#6aa5ec" stroke-width="1.6"/><rect x="1545.8" y="864" width="6" height="6" fill="#6aa5ec"/><path d="M1541.5 859.8 h3 M1541.5 859.8 v3 M1556 859.8 h-3 M1556 859.8 v3 M1541.5 874.3 h3 M1541.5 874.3 v-3 M1556 874.3 h-3 M1556 874.3 v-3" stroke="#6aa5ec" stroke-width="1"/></svg>
<!-- sec_dialog -->
<div class="a" style="left:313.5px;top:106px;width:781.2px;height:569px;background:#f0f0f0;border-radius:7px;box-shadow:0 0 0 1px rgba(60,60,60,.55),0 6px 18px rgba(0,0,0,.45);overflow:hidden">
<div class="a" style="left:0;top:0;width:100%;height:24.7px;background:#f3f3f3"></div>
<div class="a" style="left:0;top:24.7px;width:100%;height:14.4px;background:#ffffff"></div>
<div class="a" style="left:9.1px;top:66px;width:763.1px;height:474.8px;background:#fbfbfb;box-sizing:border-box;border:1px solid #e2e2e2"></div>
<div class="a" style="left:12.1px;top:71.7px;width:752.6px;height:460.9px;background:#f1f1f1"></div>
<div class="a" style="left:0;top:550.7px;width:100%;height:1px;background:#d9d9d9"></div>
</div>
<span class="t" style="left:337.20px;top:114.22px;font-size:9.75px;color:#1c1c1c;letter-spacing:-0.073px;">Менеджер проектов - [D:\Distr\!N\Тест-драйвы\TestDrive_nanoCAD_PPR_21\Тема 5_Календарное планирование\Задание\Менеджер проектов....</span>
<span class="t" style="left:320.00px;top:134.32px;font-size:9.75px;color:#1a1a1a;letter-spacing:-0.136px;">Проект</span>
<span class="t" style="left:363.30px;top:134.32px;font-size:9.75px;color:#1a1a1a;letter-spacing:-0.646px;">Вид</span>
<span class="t" style="left:391.00px;top:134.32px;font-size:9.75px;color:#1a1a1a;letter-spacing:-0.277px;">Расчёты</span>
<span class="t" style="left:439.70px;top:134.32px;font-size:9.75px;color:#1a1a1a;letter-spacing:-0.237px;">Отчёты</span>
<span class="t" style="left:484.10px;top:134.32px;font-size:9.75px;color:#1a1a1a;letter-spacing:0.224px;">Помощь</span>
<div class="a" style="left:322.6px;top:156.8px;width:57.7px;height:15.2px;background:#f2f2f2;box-sizing:border-box;border:1px solid #e2e2e2;border-bottom:none"></div>
<span class="t" style="left:344.90px;top:160.10px;font-size:9px;color:#111;letter-spacing:-0.177px;">Работы</span>
<div class="a" style="left:380.3px;top:156.8px;width:65.9px;height:15.2px;background:#f2f2f2;box-sizing:border-box;border:1px solid #e2e2e2;border-bottom:none"></div>
<span class="t" style="left:403.10px;top:160.10px;font-size:9px;color:#111;letter-spacing:-0.163px;">Расценки</span>
<div class="a" style="left:446.2px;top:156.8px;width:61px;height:15.2px;background:#f2f2f2;box-sizing:border-box;border:1px solid #e2e2e2;border-bottom:none"></div>
<span class="t" style="left:469.20px;top:160.10px;font-size:9px;color:#111;letter-spacing:-0.005px;">Техника</span>
<div class="a" style="left:507.2px;top:156.8px;width:74.3px;height:15.2px;background:#f2f2f2;box-sizing:border-box;border:1px solid #e2e2e2;border-bottom:none"></div>
<span class="t" style="left:530.80px;top:160.10px;font-size:9px;color:#111;letter-spacing:-0.176px;">Материалы</span>
<div class="a" style="left:581.5px;top:154.4px;width:145.5px;height:18.2px;background:#f7f7f7;box-sizing:border-box;border:1px solid #d4d4d4;border-bottom:none"></div>
<span class="t" style="left:605.10px;top:158.40px;font-size:9px;color:#111;letter-spacing:-0.077px;">Календарное планирование</span>
<div class="a" style="left:727px;top:156.8px;width:120px;height:15.2px;background:#f2f2f2;box-sizing:border-box;border:1px solid #e2e2e2;border-bottom:none"></div>
<span class="t" style="left:748.70px;top:160.10px;font-size:9px;color:#111;letter-spacing:-0.083px;">Связь с IFC-объектами</span>
<span class="t" style="left:315.50px;top:661.80px;font-size:9px;color:#111;letter-spacing:0.009px;">D:\Distr\!N\Тест-драйвы\TestDrive_nanoCAD_PPR_21\Тема 5_Календарное планирование\Задание\Менеджер проектов.dwg</span>
<div class="a" style="left:330.6px;top:205.3px;width:283.5px;height:432.5px;background:#fff;box-sizing:border-box;border:1px solid #a8a8a8;overflow:hidden"></div>
<div class="a" style="left:331.6px;top:245.3px;width:260.7px;height:391.5px;overflow:hidden">
<div class="a" style="left:0;top:0px;width:300px;height:13.8px;background:#edf2fa;border-bottom:1px solid #d9d9d9;box-sizing:border-box"></div>
<div class="a" style="left:0;top:13.8px;width:300px;height:13.8px;background:#ffffff;border-bottom:1px solid #d9d9d9;box-sizing:border-box"></div>
<div class="a" style="left:0;top:27.6px;width:300px;height:13.8px;background:#e9e9e9;border-bottom:1px solid #d9d9d9;box-sizing:border-box"></div>
<div class="a" style="left:0;top:41.4px;width:300px;height:13.8px;background:#ffffff;border-bottom:1px solid #d9d9d9;box-sizing:border-box"></div>
<div class="a" style="left:0;top:55.2px;width:300px;height:13.8px;background:#e9e9e9;border-bottom:1px solid #d9d9d9;box-sizing:border-box"></div>
<div class="a" style="left:0;top:69px;width:300px;height:13.8px;background:#ffffff;border-bottom:1px solid #d9d9d9;box-sizing:border-box"></div>
<div class="a" style="left:0;top:82.8px;width:300px;height:13.8px;background:#e9e9e9;border-bottom:1px solid #d9d9d9;box-sizing:border-box"></div>
<div class="a" style="left:0;top:96.6px;width:300px;height:13.8px;background:#ffffff;border-bottom:1px solid #d9d9d9;box-sizing:border-box"></div>
<div class="a" style="left:0;top:110.4px;width:300px;height:13.8px;background:#e9e9e9;border-bottom:1px solid #d9d9d9;box-sizing:border-box"></div>
<div class="a" style="left:0;top:124.2px;width:300px;height:13.8px;background:#ffffff;border-bottom:1px solid #d9d9d9;box-sizing:border-box"></div>
<div class="a" style="left:0;top:138px;width:300px;height:13.8px;background:#e9e9e9;border-bottom:1px solid #d9d9d9;box-sizing:border-box"></div>
<div class="a" style="left:0;top:151.8px;width:300px;height:13.8px;background:#ffffff;border-bottom:1px solid #d9d9d9;box-sizing:border-box"></div>
<div class="a" style="left:0;top:165.6px;width:300px;height:13.8px;background:#e9e9e9;border-bottom:1px solid #d9d9d9;box-sizing:border-box"></div>
<div class="a" style="left:0;top:179.4px;width:300px;height:13.8px;background:#ffffff;border-bottom:1px solid #d9d9d9;box-sizing:border-box"></div>
<div class="a" style="left:0;top:193.2px;width:300px;height:13.8px;background:#e9e9e9;border-bottom:1px solid #d9d9d9;box-sizing:border-box"></div>
<div class="a" style="left:0;top:207px;width:300px;height:13.8px;background:#ffffff;border-bottom:1px solid #d9d9d9;box-sizing:border-box"></div>
<div class="a" style="left:0;top:220.8px;width:300px;height:13.8px;background:#e9e9e9;border-bottom:1px solid #d9d9d9;box-sizing:border-box"></div>
<div class="a" style="left:0;top:234.6px;width:300px;height:13.8px;background:#ffffff;border-bottom:1px solid #d9d9d9;box-sizing:border-box"></div>
<div class="a" style="left:0;top:248.4px;width:300px;height:13.8px;background:#e9e9e9;border-bottom:1px solid #d9d9d9;box-sizing:border-box"></div>
<div class="a" style="left:0;top:262.2px;width:300px;height:13.8px;background:#ffffff;border-bottom:1px solid #d9d9d9;box-sizing:border-box"></div>
<div class="a" style="left:0;top:276px;width:300px;height:13.8px;background:#e9e9e9;border-bottom:1px solid #d9d9d9;box-sizing:border-box"></div>
<div class="a" style="left:0;top:289.8px;width:300px;height:13.8px;background:#ffffff;border-bottom:1px solid #d9d9d9;box-sizing:border-box"></div>
<div class="a" style="left:0;top:303.6px;width:300px;height:13.8px;background:#e9e9e9;border-bottom:1px solid #d9d9d9;box-sizing:border-box"></div>
<div class="a" style="left:0;top:317.4px;width:300px;height:13.8px;background:#ffffff;border-bottom:1px solid #d9d9d9;box-sizing:border-box"></div>
<div class="a" style="left:0;top:331.2px;width:300px;height:13.8px;background:#e9e9e9;border-bottom:1px solid #d9d9d9;box-sizing:border-box"></div>
<div class="a" style="left:0;top:345px;width:300px;height:13.8px;background:#ffffff;border-bottom:1px solid #d9d9d9;box-sizing:border-box"></div>
<div class="a" style="left:0;top:358.8px;width:300px;height:13.8px;background:#e9e9e9;border-bottom:1px solid #d9d9d9;box-sizing:border-box"></div>
<div class="a" style="left:0;top:372.6px;width:300px;height:13.8px;background:#ffffff;border-bottom:1px solid #d9d9d9;box-sizing:border-box"></div>
<div class="a" style="left:0;top:386.4px;width:300px;height:13.8px;background:#e9e9e9;border-bottom:1px solid #d9d9d9;box-sizing:border-box"></div>
</div>
<div class="a" style="left:462.4px;top:206.3px;width:1px;height:430.5px;background:#dcdcdc;"></div>
<div class="a" style="left:488.5px;top:206.3px;width:1px;height:430.5px;background:#dcdcdc;"></div>
<div class="a" style="left:514.9px;top:206.3px;width:1px;height:430.5px;background:#dcdcdc;"></div>
<div class="a" style="left:540.5px;top:206.3px;width:1px;height:430.5px;background:#dcdcdc;"></div>
<div class="a" style="left:566.7px;top:206.3px;width:1px;height:430.5px;background:#dcdcdc;"></div>
<div class="a" style="left:592.3px;top:206.3px;width:1px;height:430.5px;background:#dcdcdc;"></div>
<div class="a" style="left:331.6px;top:244.7px;width:260.7px;height:0.8px;background:#d0d0d0;"></div>
<span class="t" style="left:334.80px;top:221.50px;font-size:9px;color:#111;letter-spacing:-0.115px;">Наименование</span>
<span class="t" style="left:466.20px;top:221.50px;font-size:9px;color:#111;">Дл...</span>
<span class="t" style="left:491.80px;top:216.10px;font-size:9px;color:#111;letter-spacing:-0.107px;">Дата</span>
<span class="t" style="left:491.80px;top:227.70px;font-size:9px;color:#111;">на...</span>
<span class="t" style="left:518.00px;top:216.10px;font-size:9px;color:#111;letter-spacing:-0.107px;">Дата</span>
<span class="t" style="left:518.00px;top:227.70px;font-size:9px;color:#111;">ок...</span>
<span class="t" style="left:543.60px;top:216.10px;font-size:9px;color:#111;letter-spacing:-0.515px;">Режи</span>
<span class="t" style="left:543.60px;top:227.70px;font-size:9px;color:#111;">пл...</span>
<span class="t" style="left:569.20px;top:216.10px;font-size:9px;color:#111;letter-spacing:-0.533px;">Проц</span>
<span class="t" style="left:569.20px;top:227.70px;font-size:9px;color:#111;">вы...</span>
<div class="a" style="left:0;top:0;width:1560px;height:636.8px;overflow:hidden">
<span class="t" style="left:359.10px;top:247.70px;font-size:9.4px;color:#111;letter-spacing:-0.207px;font-weight:bold;">1 Подготовительн...</span>
<span class="t" style="left:464.50px;top:248.40px;font-size:9px;color:#111;">51....</span>
<span class="t" style="left:490.10px;top:248.40px;font-size:9px;color:#111;">03....</span>
<span class="t" style="left:516.00px;top:248.40px;font-size:9px;color:#111;">23....</span>
<span class="t" style="left:541.90px;top:248.40px;font-size:9px;color:#111;">Вр...</span>
<span class="t" style="left:567.50px;top:248.40px;font-size:9px;color:#111;">0</span>
<span class="t" style="left:372.30px;top:262.20px;font-size:9px;color:#111;letter-spacing:0.000px;">1.1 Освоение стро...</span>
<span class="t" style="left:464.50px;top:262.20px;font-size:9px;color:#111;">43....</span>
<span class="t" style="left:490.10px;top:262.20px;font-size:9px;color:#111;">11....</span>
<span class="t" style="left:516.00px;top:262.20px;font-size:9px;color:#111;">23....</span>
<span class="t" style="left:541.90px;top:262.20px;font-size:9px;color:#111;">Вр...</span>
<span class="t" style="left:567.50px;top:262.20px;font-size:9px;color:#111;">0</span>
<span class="t" style="left:372.30px;top:276.00px;font-size:9px;color:#111;letter-spacing:0.000px;">1.2 Уплотнение гр...</span>
<span class="t" style="left:464.50px;top:276.00px;font-size:9px;color:#111;">25 ...</span>
<span class="t" style="left:490.10px;top:276.00px;font-size:9px;color:#111;">13....</span>
<span class="t" style="left:516.00px;top:276.00px;font-size:9px;color:#111;">07....</span>
<span class="t" style="left:541.90px;top:276.00px;font-size:9px;color:#111;">Вр...</span>
<span class="t" style="left:567.50px;top:276.00px;font-size:9px;color:#111;">0</span>
<span class="t" style="left:372.30px;top:289.80px;font-size:9px;color:#111;letter-spacing:0.000px;">1.3 Устройство по...</span>
<span class="t" style="left:464.50px;top:289.80px;font-size:9px;color:#111;">8.0...</span>
<span class="t" style="left:490.10px;top:289.80px;font-size:9px;color:#111;">03....</span>
<span class="t" style="left:516.00px;top:289.80px;font-size:9px;color:#111;">11....</span>
<span class="t" style="left:541.90px;top:289.80px;font-size:9px;color:#111;">Вр...</span>
<span class="t" style="left:567.50px;top:289.80px;font-size:9px;color:#111;">0</span>
<span class="t" style="left:359.10px;top:302.90px;font-size:9.4px;color:#111;font-weight:bold;">2 Опоры</span>
<span class="t" style="left:464.50px;top:303.60px;font-size:9px;color:#8a8a8a;">12...</span>
<span class="t" style="left:490.10px;top:303.60px;font-size:9px;color:#111;">03....</span>
<span class="t" style="left:516.00px;top:303.60px;font-size:9px;color:#111;">05....</span>
<span class="t" style="left:541.90px;top:303.60px;font-size:9px;color:#111;">Ав...</span>
<span class="t" style="left:567.50px;top:303.60px;font-size:9px;color:#111;">0</span>
<span class="t" style="left:372.30px;top:317.40px;font-size:9px;color:#111;letter-spacing:0.000px;">2.1 Устройство пл...</span>
<span class="t" style="left:464.50px;top:317.40px;font-size:9px;color:#111;">20,...</span>
<span class="t" style="left:490.10px;top:317.40px;font-size:9px;color:#111;">22....</span>
<span class="t" style="left:516.00px;top:317.40px;font-size:9px;color:#111;">11....</span>
<span class="t" style="left:541.90px;top:317.40px;font-size:9px;color:#111;">Вр...</span>
<span class="t" style="left:567.50px;top:317.40px;font-size:9px;color:#111;">0</span>
<span class="t" style="left:372.30px;top:331.20px;font-size:9px;color:#111;letter-spacing:0.000px;">2.2 Разработка ко...</span>
<span class="t" style="left:464.50px;top:331.20px;font-size:9px;color:#8a8a8a;">74,...</span>
<span class="t" style="left:490.10px;top:331.20px;font-size:9px;color:#111;">10....</span>
<span class="t" style="left:516.00px;top:331.20px;font-size:9px;color:#111;">24....</span>
<span class="t" style="left:541.90px;top:331.20px;font-size:9px;color:#111;">Ав...</span>
<span class="t" style="left:567.50px;top:331.20px;font-size:9px;color:#111;">0</span>
<span class="t" style="left:385.00px;top:345.00px;font-size:9px;color:#111;">2.2.1 Опора №1</span>
<span class="t" style="left:464.50px;top:345.00px;font-size:9px;color:#111;">14 ...</span>
<span class="t" style="left:490.10px;top:345.00px;font-size:9px;color:#111;">10....</span>
<span class="t" style="left:516.00px;top:345.00px;font-size:9px;color:#111;">24....</span>
<span class="t" style="left:541.90px;top:345.00px;font-size:9px;color:#111;">Вр...</span>
<span class="t" style="left:567.50px;top:345.00px;font-size:9px;color:#111;">0</span>
<span class="t" style="left:385.00px;top:358.80px;font-size:9px;color:#111;">2.2.2 Опора №2</span>
<span class="t" style="left:464.50px;top:358.80px;font-size:9px;color:#111;">25....</span>
<span class="t" style="left:490.10px;top:358.80px;font-size:9px;color:#111;">24....</span>
<span class="t" style="left:516.00px;top:358.80px;font-size:9px;color:#111;">18....</span>
<span class="t" style="left:541.90px;top:358.80px;font-size:9px;color:#111;">Вр...</span>
<span class="t" style="left:567.50px;top:358.80px;font-size:9px;color:#111;">0</span>
<span class="t" style="left:385.00px;top:372.60px;font-size:9px;color:#111;">2.2.3 Опора №3</span>
<span class="t" style="left:464.50px;top:372.60px;font-size:9px;color:#111;">21 ...</span>
<span class="t" style="left:490.10px;top:372.60px;font-size:9px;color:#111;">18....</span>
<span class="t" style="left:516.00px;top:372.60px;font-size:9px;color:#111;">10....</span>
<span class="t" style="left:541.90px;top:372.60px;font-size:9px;color:#111;">Вр...</span>
<span class="t" style="left:567.50px;top:372.60px;font-size:9px;color:#111;">0</span>
<span class="t" style="left:385.00px;top:386.40px;font-size:9px;color:#111;">2.2.4 Опора №4</span>
<span class="t" style="left:464.50px;top:386.40px;font-size:9px;color:#111;">14 ...</span>
<span class="t" style="left:490.10px;top:386.40px;font-size:9px;color:#111;">10....</span>
<span class="t" style="left:516.00px;top:386.40px;font-size:9px;color:#111;">24....</span>
<span class="t" style="left:541.90px;top:386.40px;font-size:9px;color:#111;">Вр...</span>
<span class="t" style="left:567.50px;top:386.40px;font-size:9px;color:#111;">0</span>
<span class="t" style="left:372.30px;top:400.20px;font-size:9px;color:#111;letter-spacing:-0.057px;">2.3 Бетонирование...</span>
<span class="t" style="left:464.50px;top:400.20px;font-size:9px;color:#8a8a8a;">18....</span>
<span class="t" style="left:490.10px;top:400.20px;font-size:9px;color:#111;">03....</span>
<span class="t" style="left:516.00px;top:400.20px;font-size:9px;color:#111;">21....</span>
<span class="t" style="left:541.90px;top:400.20px;font-size:9px;color:#111;">Ав...</span>
<span class="t" style="left:567.50px;top:400.20px;font-size:9px;color:#111;">0</span>
<span class="t" style="left:385.00px;top:414.00px;font-size:9px;color:#111;">2.3.1 Опора №1</span>
<span class="t" style="left:464.50px;top:414.00px;font-size:9px;color:#111;">18....</span>
<span class="t" style="left:490.10px;top:414.00px;font-size:9px;color:#111;">03....</span>
<span class="t" style="left:516.00px;top:414.00px;font-size:9px;color:#111;">21....</span>
<span class="t" style="left:541.90px;top:414.00px;font-size:9px;color:#111;">Ав...</span>
<span class="t" style="left:567.50px;top:414.00px;font-size:9px;color:#111;">0</span>
<span class="t" style="left:385.00px;top:427.80px;font-size:9px;color:#111;">2.3.2 Опора №2</span>
<span class="t" style="left:464.50px;top:427.80px;font-size:9px;color:#111;">16....</span>
<span class="t" style="left:490.10px;top:427.80px;font-size:9px;color:#111;">03....</span>
<span class="t" style="left:516.00px;top:427.80px;font-size:9px;color:#111;">19....</span>
<span class="t" style="left:541.90px;top:427.80px;font-size:9px;color:#111;">Ав...</span>
<span class="t" style="left:567.50px;top:427.80px;font-size:9px;color:#111;">0</span>
<span class="t" style="left:385.00px;top:441.60px;font-size:9px;color:#111;">2.3.3 Опора №3</span>
<span class="t" style="left:464.50px;top:441.60px;font-size:9px;color:#111;">16....</span>
<span class="t" style="left:490.10px;top:441.60px;font-size:9px;color:#111;">03....</span>
<span class="t" style="left:516.00px;top:441.60px;font-size:9px;color:#111;">19....</span>
<span class="t" style="left:541.90px;top:441.60px;font-size:9px;color:#111;">Ав...</span>
<span class="t" style="left:567.50px;top:441.60px;font-size:9px;color:#111;">0</span>
<span class="t" style="left:385.00px;top:455.40px;font-size:9px;color:#111;">2.3.4 Опора №4</span>
<span class="t" style="left:464.50px;top:455.40px;font-size:9px;color:#111;">16....</span>
<span class="t" style="left:490.10px;top:455.40px;font-size:9px;color:#111;">03....</span>
<span class="t" style="left:516.00px;top:455.40px;font-size:9px;color:#111;">19....</span>
<span class="t" style="left:541.90px;top:455.40px;font-size:9px;color:#111;">Ав...</span>
<span class="t" style="left:567.50px;top:455.40px;font-size:9px;color:#111;">0</span>
<span class="t" style="left:372.30px;top:469.20px;font-size:9px;color:#111;letter-spacing:-0.062px;">2.4 Сооружение оп...</span>
<span class="t" style="left:464.50px;top:469.20px;font-size:9px;color:#8a8a8a;">10...</span>
<span class="t" style="left:490.10px;top:469.20px;font-size:9px;color:#111;">21....</span>
<span class="t" style="left:516.00px;top:469.20px;font-size:9px;color:#111;">05....</span>
<span class="t" style="left:541.90px;top:469.20px;font-size:9px;color:#111;">Ав...</span>
<span class="t" style="left:567.50px;top:469.20px;font-size:9px;color:#111;">0</span>
<span class="t" style="left:385.00px;top:483.00px;font-size:9px;color:#111;">2.4.1 Опора №1</span>
<span class="t" style="left:464.50px;top:483.00px;font-size:9px;color:#111;">21 ад</span>
<span class="t" style="left:490.10px;top:483.00px;font-size:9px;color:#111;">21....</span>
<span class="t" style="left:516.00px;top:483.00px;font-size:9px;color:#111;">11....</span>
<span class="t" style="left:541.90px;top:483.00px;font-size:9px;color:#111;">Ав...</span>
<span class="t" style="left:567.50px;top:483.00px;font-size:9px;color:#111;">0</span>
<span class="t" style="left:385.00px;top:496.80px;font-size:9px;color:#111;">2.4.2 Опора №2</span>
<span class="t" style="left:464.50px;top:496.80px;font-size:9px;color:#111;">32....</span>
<span class="t" style="left:490.10px;top:496.80px;font-size:9px;color:#111;">11....</span>
<span class="t" style="left:516.00px;top:496.80px;font-size:9px;color:#111;">14....</span>
<span class="t" style="left:541.90px;top:496.80px;font-size:9px;color:#111;">Ав...</span>
<span class="t" style="left:567.50px;top:496.80px;font-size:9px;color:#111;">0</span>
<span class="t" style="left:385.00px;top:510.60px;font-size:9px;color:#111;">2.4.3 Опора №3</span>
<span class="t" style="left:464.50px;top:510.60px;font-size:9px;color:#111;">30....</span>
<span class="t" style="left:490.10px;top:510.60px;font-size:9px;color:#111;">14....</span>
<span class="t" style="left:516.00px;top:510.60px;font-size:9px;color:#111;">14....</span>
<span class="t" style="left:541.90px;top:510.60px;font-size:9px;color:#111;">Ав...</span>
<span class="t" style="left:567.50px;top:510.60px;font-size:9px;color:#111;">0</span>
<span class="t" style="left:385.00px;top:524.40px;font-size:9px;color:#111;">2.4.4 Опора №4</span>
<span class="t" style="left:464.50px;top:524.40px;font-size:9px;color:#111;">21 ад</span>
<span class="t" style="left:490.10px;top:524.40px;font-size:9px;color:#111;">14....</span>
<span class="t" style="left:516.00px;top:524.40px;font-size:9px;color:#111;">05....</span>
<span class="t" style="left:541.90px;top:524.40px;font-size:9px;color:#111;">Ав...</span>
<span class="t" style="left:567.50px;top:524.40px;font-size:9px;color:#111;">0</span>
<span class="t" style="left:359.10px;top:537.50px;font-size:9.4px;color:#111;letter-spacing:-0.207px;font-weight:bold;">3 Пролетные строе...</span>
<span class="t" style="left:464.50px;top:538.20px;font-size:9px;color:#8a8a8a;">51...</span>
<span class="t" style="left:490.10px;top:538.20px;font-size:9px;color:#111;">14....</span>
<span class="t" style="left:516.00px;top:538.20px;font-size:9px;color:#111;">06....</span>
<span class="t" style="left:541.90px;top:538.20px;font-size:9px;color:#111;">Ав...</span>
<span class="t" style="left:567.50px;top:538.20px;font-size:9px;color:#111;">0</span>
<span class="t" style="left:372.30px;top:552.00px;font-size:9px;color:#111;letter-spacing:0.000px;">3.1 Отсыпка сборо...</span>
<span class="t" style="left:464.50px;top:552.00px;font-size:9px;color:#111;">35 ад</span>
<span class="t" style="left:490.10px;top:552.00px;font-size:9px;color:#111;">14....</span>
<span class="t" style="left:516.00px;top:552.00px;font-size:9px;color:#111;">19....</span>
<span class="t" style="left:541.90px;top:552.00px;font-size:9px;color:#111;">Ав...</span>
<span class="t" style="left:567.50px;top:552.00px;font-size:9px;color:#111;">0</span>
<span class="t" style="left:372.30px;top:565.80px;font-size:9px;color:#111;letter-spacing:-0.144px;">3.2 Монтаж времен...</span>
<span class="t" style="left:464.50px;top:565.80px;font-size:9px;color:#111;">35 ад</span>
<span class="t" style="left:490.10px;top:565.80px;font-size:9px;color:#111;">19....</span>
<span class="t" style="left:516.00px;top:565.80px;font-size:9px;color:#111;">23....</span>
<span class="t" style="left:541.90px;top:565.80px;font-size:9px;color:#111;">Ав...</span>
<span class="t" style="left:567.50px;top:565.80px;font-size:9px;color:#111;">0</span>
<span class="t" style="left:372.30px;top:579.60px;font-size:9px;color:#111;letter-spacing:0.000px;">3.3 Сборка и надв...</span>
<span class="t" style="left:464.50px;top:579.60px;font-size:9px;color:#111;">26...</span>
<span class="t" style="left:490.10px;top:579.60px;font-size:9px;color:#111;">14....</span>
<span class="t" style="left:516.00px;top:579.60px;font-size:9px;color:#111;">03....</span>
<span class="t" style="left:541.90px;top:579.60px;font-size:9px;color:#111;">Вр...</span>
<span class="t" style="left:567.50px;top:579.60px;font-size:9px;color:#111;">0</span>
<span class="t" style="left:372.30px;top:593.40px;font-size:9px;color:#111;letter-spacing:-0.057px;">3.4 Бетонирование...</span>
<span class="t" style="left:464.50px;top:593.40px;font-size:9px;color:#111;">8 ад</span>
<span class="t" style="left:490.10px;top:593.40px;font-size:9px;color:#111;">03....</span>
<span class="t" style="left:516.00px;top:593.40px;font-size:9px;color:#111;">11....</span>
<span class="t" style="left:541.90px;top:593.40px;font-size:9px;color:#111;">Ав...</span>
<span class="t" style="left:567.50px;top:593.40px;font-size:9px;color:#111;">0</span>
<span class="t" style="left:372.30px;top:607.20px;font-size:9px;color:#111;letter-spacing:-0.057px;">3.5 Бетонирование...</span>
<span class="t" style="left:464.50px;top:607.20px;font-size:9px;color:#111;">98....</span>
<span class="t" style="left:490.10px;top:607.20px;font-size:9px;color:#111;">11....</span>
<span class="t" style="left:516.00px;top:607.20px;font-size:9px;color:#111;">19....</span>
<span class="t" style="left:541.90px;top:607.20px;font-size:9px;color:#111;">Ав...</span>
<span class="t" style="left:567.50px;top:607.20px;font-size:9px;color:#111;">0</span>
<span class="t" style="left:372.30px;top:621.00px;font-size:9px;color:#111;letter-spacing:-0.099px;">3.6 Устройство мос...</span>
<span class="t" style="left:464.50px;top:621.00px;font-size:9px;color:#111;">43 ...</span>
<span class="t" style="left:490.10px;top:621.00px;font-size:9px;color:#111;">12....</span>
<span class="t" style="left:516.00px;top:621.00px;font-size:9px;color:#111;">24....</span>
<span class="t" style="left:541.90px;top:621.00px;font-size:9px;color:#111;">Вр...</span>
<span class="t" style="left:567.50px;top:621.00px;font-size:9px;color:#111;">0</span>
<span class="t" style="left:372.30px;top:634.80px;font-size:9px;color:#111;letter-spacing:0.000px;">3.7 Установка пер...</span>
<span class="t" style="left:464.50px;top:634.80px;font-size:9px;color:#8a8a8a;">12...</span>
<span class="t" style="left:490.10px;top:634.80px;font-size:9px;color:#111;">24....</span>
<span class="t" style="left:516.00px;top:634.80px;font-size:9px;color:#111;">06....</span>
<span class="t" style="left:541.90px;top:634.80px;font-size:9px;color:#111;">Ав...</span>
<span class="t" style="left:567.50px;top:634.80px;font-size:9px;color:#111;">0</span>
<svg style="left:0;top:0" width="700" height="640" viewBox="0 0 700 640"><g transform="translate(345.4 246.5) scale(1)"><path d="M6.3 4.7 L10.8 0.3" stroke="#d86060" stroke-width="1.3"/><path d="M1 6.2 L4.6 3.2 L7.8 6.4 L5.2 9.6 Q2.5 11.5 0.4 10.6 Z" fill="#3f73b4"/><path d="M1.6 6.6 L4.5 4.2" stroke="#8fb4e0" stroke-width=".8"/><circle cx="9.3" cy="2.2" r="2.3" fill="#f4f6fa" stroke="#3f6496" stroke-width=".9"/><circle cx="9.3" cy="2.2" r=".8" fill="#3f6496"/></g><rect x="334" y="248.3" width="7" height="7" fill="#fff" stroke="#8a8a8a" stroke-width="1"/><path d="M335.5 251.8 h4" stroke="#333" stroke-width="1"/><g transform="translate(357.9 260.3) scale(1)"><path d="M6.3 4.7 L10.8 0.3" stroke="#d86060" stroke-width="1.3"/><path d="M1 6.2 L4.6 3.2 L7.8 6.4 L5.2 9.6 Q2.5 11.5 0.4 10.6 Z" fill="#3f73b4"/><path d="M1.6 6.6 L4.5 4.2" stroke="#8fb4e0" stroke-width=".8"/><circle cx="9.3" cy="2.2" r="2.3" fill="#f4f6fa" stroke="#3f6496" stroke-width=".9"/><circle cx="9.3" cy="2.2" r=".8" fill="#3f6496"/></g><g transform="translate(357.9 274.1) scale(1)"><path d="M6.3 4.7 L10.8 0.3" stroke="#d86060" stroke-width="1.3"/><path d="M1 6.2 L4.6 3.2 L7.8 6.4 L5.2 9.6 Q2.5 11.5 0.4 10.6 Z" fill="#3f73b4"/><path d="M1.6 6.6 L4.5 4.2" stroke="#8fb4e0" stroke-width=".8"/><circle cx="9.3" cy="2.2" r="2.3" fill="#f4f6fa" stroke="#3f6496" stroke-width=".9"/><circle cx="9.3" cy="2.2" r=".8" fill="#3f6496"/></g><g transform="translate(357.9 287.9) scale(1)"><path d="M6.3 4.7 L10.8 0.3" stroke="#d86060" stroke-width="1.3"/><path d="M1 6.2 L4.6 3.2 L7.8 6.4 L5.2 9.6 Q2.5 11.5 0.4 10.6 Z" fill="#3f73b4"/><path d="M1.6 6.6 L4.5 4.2" stroke="#8fb4e0" stroke-width=".8"/><circle cx="9.3" cy="2.2" r="2.3" fill="#f4f6fa" stroke="#3f6496" stroke-width=".9"/><circle cx="9.3" cy="2.2" r=".8" fill="#3f6496"/></g><g transform="translate(345.4 301.7) scale(1)"><path d="M6.3 4.7 L10.8 0.3" stroke="#d86060" stroke-width="1.3"/><path d="M1 6.2 L4.6 3.2 L7.8 6.4 L5.2 9.6 Q2.5 11.5 0.4 10.6 Z" fill="#3f73b4"/><path d="M1.6 6.6 L4.5 4.2" stroke="#8fb4e0" stroke-width=".8"/><path d="M6.6 6.6 H10.6 M6.6 6.6 L8.8 9 L6.6 11.4 H10.6" stroke="#e08a3a" stroke-width="1.1" fill="none"/></g><rect x="334" y="303.5" width="7" height="7" fill="#fff" stroke="#8a8a8a" stroke-width="1"/><path d="M335.5 307 h4" stroke="#333" stroke-width="1"/><g transform="translate(357.9 315.5) scale(1)"><path d="M6.3 4.7 L10.8 0.3" stroke="#d86060" stroke-width="1.3"/><path d="M1 6.2 L4.6 3.2 L7.8 6.4 L5.2 9.6 Q2.5 11.5 0.4 10.6 Z" fill="#3f73b4"/><path d="M1.6 6.6 L4.5 4.2" stroke="#8fb4e0" stroke-width=".8"/><circle cx="9.3" cy="2.2" r="2.3" fill="#f4f6fa" stroke="#3f6496" stroke-width=".9"/><circle cx="9.3" cy="2.2" r=".8" fill="#3f6496"/></g><g transform="translate(357.9 329.3) scale(1)"><path d="M6.3 4.7 L10.8 0.3" stroke="#d86060" stroke-width="1.3"/><path d="M1 6.2 L4.6 3.2 L7.8 6.4 L5.2 9.6 Q2.5 11.5 0.4 10.6 Z" fill="#3f73b4"/><path d="M1.6 6.6 L4.5 4.2" stroke="#8fb4e0" stroke-width=".8"/><circle cx="9.3" cy="2.2" r="2.3" fill="#f4f6fa" stroke="#3f6496" stroke-width=".9"/><circle cx="9.3" cy="2.2" r=".8" fill="#3f6496"/></g><rect x="346.6" y="331.1" width="7" height="7" fill="#fff" stroke="#8a8a8a" stroke-width="1"/><path d="M348.1 334.6 h4" stroke="#333" stroke-width="1"/><g transform="translate(371 343.1) scale(1)"><path d="M6.3 4.7 L10.8 0.3" stroke="#d86060" stroke-width="1.3"/><path d="M1 6.2 L4.6 3.2 L7.8 6.4 L5.2 9.6 Q2.5 11.5 0.4 10.6 Z" fill="#3f73b4"/><path d="M1.6 6.6 L4.5 4.2" stroke="#8fb4e0" stroke-width=".8"/></g><g transform="translate(371 356.9) scale(1)"><path d="M6.3 4.7 L10.8 0.3" stroke="#d86060" stroke-width="1.3"/><path d="M1 6.2 L4.6 3.2 L7.8 6.4 L5.2 9.6 Q2.5 11.5 0.4 10.6 Z" fill="#3f73b4"/><path d="M1.6 6.6 L4.5 4.2" stroke="#8fb4e0" stroke-width=".8"/></g><g transform="translate(371 370.7) scale(1)"><path d="M6.3 4.7 L10.8 0.3" stroke="#d86060" stroke-width="1.3"/><path d="M1 6.2 L4.6 3.2 L7.8 6.4 L5.2 9.6 Q2.5 11.5 0.4 10.6 Z" fill="#3f73b4"/><path d="M1.6 6.6 L4.5 4.2" stroke="#8fb4e0" stroke-width=".8"/></g><g transform="translate(371 384.5) scale(1)"><path d="M6.3 4.7 L10.8 0.3" stroke="#d86060" stroke-width="1.3"/><path d="M1 6.2 L4.6 3.2 L7.8 6.4 L5.2 9.6 Q2.5 11.5 0.4 10.6 Z" fill="#3f73b4"/><path d="M1.6 6.6 L4.5 4.2" stroke="#8fb4e0" stroke-width=".8"/></g><g transform="translate(357.9 398.3) scale(1)"><path d="M6.3 4.7 L10.8 0.3" stroke="#d86060" stroke-width="1.3"/><path d="M1 6.2 L4.6 3.2 L7.8 6.4 L5.2 9.6 Q2.5 11.5 0.4 10.6 Z" fill="#3f73b4"/><path d="M1.6 6.6 L4.5 4.2" stroke="#8fb4e0" stroke-width=".8"/><circle cx="9.3" cy="2.2" r="2.3" fill="#f4f6fa" stroke="#3f6496" stroke-width=".9"/><circle cx="9.3" cy="2.2" r=".8" fill="#3f6496"/></g><rect x="346.6" y="400.1" width="7" height="7" fill="#fff" stroke="#8a8a8a" stroke-width="1"/><path d="M348.1 403.6 h4" stroke="#333" stroke-width="1"/><g transform="translate(371 412.1) scale(1)"><path d="M6.3 4.7 L10.8 0.3" stroke="#d86060" stroke-width="1.3"/><path d="M1 6.2 L4.6 3.2 L7.8 6.4 L5.2 9.6 Q2.5 11.5 0.4 10.6 Z" fill="#3f73b4"/><path d="M1.6 6.6 L4.5 4.2" stroke="#8fb4e0" stroke-width=".8"/></g><g transform="translate(371 425.9) scale(1)"><path d="M6.3 4.7 L10.8 0.3" stroke="#d86060" stroke-width="1.3"/><path d="M1 6.2 L4.6 3.2 L7.8 6.4 L5.2 9.6 Q2.5 11.5 0.4 10.6 Z" fill="#3f73b4"/><path d="M1.6 6.6 L4.5 4.2" stroke="#8fb4e0" stroke-width=".8"/></g><g transform="translate(371 439.7) scale(1)"><path d="M6.3 4.7 L10.8 0.3" stroke="#d86060" stroke-width="1.3"/><path d="M1 6.2 L4.6 3.2 L7.8 6.4 L5.2 9.6 Q2.5 11.5 0.4 10.6 Z" fill="#3f73b4"/><path d="M1.6 6.6 L4.5 4.2" stroke="#8fb4e0" stroke-width=".8"/></g><g transform="translate(371 453.5) scale(1)"><path d="M6.3 4.7 L10.8 0.3" stroke="#d86060" stroke-width="1.3"/><path d="M1 6.2 L4.6 3.2 L7.8 6.4 L5.2 9.6 Q2.5 11.5 0.4 10.6 Z" fill="#3f73b4"/><path d="M1.6 6.6 L4.5 4.2" stroke="#8fb4e0" stroke-width=".8"/></g><g transform="translate(357.9 467.3) scale(1)"><path d="M6.3 4.7 L10.8 0.3" stroke="#d86060" stroke-width="1.3"/><path d="M1 6.2 L4.6 3.2 L7.8 6.4 L5.2 9.6 Q2.5 11.5 0.4 10.6 Z" fill="#3f73b4"/><path d="M1.6 6.6 L4.5 4.2" stroke="#8fb4e0" stroke-width=".8"/><circle cx="9.3" cy="2.2" r="2.3" fill="#f4f6fa" stroke="#3f6496" stroke-width=".9"/><circle cx="9.3" cy="2.2" r=".8" fill="#3f6496"/></g><rect x="346.6" y="469.1" width="7" height="7" fill="#fff" stroke="#8a8a8a" stroke-width="1"/><path d="M348.1 472.6 h4" stroke="#333" stroke-width="1"/><g transform="translate(371 481.1) scale(1)"><path d="M6.3 4.7 L10.8 0.3" stroke="#d86060" stroke-width="1.3"/><path d="M1 6.2 L4.6 3.2 L7.8 6.4 L5.2 9.6 Q2.5 11.5 0.4 10.6 Z" fill="#3f73b4"/><path d="M1.6 6.6 L4.5 4.2" stroke="#8fb4e0" stroke-width=".8"/></g><g transform="translate(371 494.9) scale(1)"><path d="M6.3 4.7 L10.8 0.3" stroke="#d86060" stroke-width="1.3"/><path d="M1 6.2 L4.6 3.2 L7.8 6.4 L5.2 9.6 Q2.5 11.5 0.4 10.6 Z" fill="#3f73b4"/><path d="M1.6 6.6 L4.5 4.2" stroke="#8fb4e0" stroke-width=".8"/></g><g transform="translate(371 508.7) scale(1)"><path d="M6.3 4.7 L10.8 0.3" stroke="#d86060" stroke-width="1.3"/><path d="M1 6.2 L4.6 3.2 L7.8 6.4 L5.2 9.6 Q2.5 11.5 0.4 10.6 Z" fill="#3f73b4"/><path d="M1.6 6.6 L4.5 4.2" stroke="#8fb4e0" stroke-width=".8"/></g><g transform="translate(371 522.5) scale(1)"><path d="M6.3 4.7 L10.8 0.3" stroke="#d86060" stroke-width="1.3"/><path d="M1 6.2 L4.6 3.2 L7.8 6.4 L5.2 9.6 Q2.5 11.5 0.4 10.6 Z" fill="#3f73b4"/><path d="M1.6 6.6 L4.5 4.2" stroke="#8fb4e0" stroke-width=".8"/></g><g transform="translate(345.4 536.3) scale(1)"><path d="M6.3 4.7 L10.8 0.3" stroke="#d86060" stroke-width="1.3"/><path d="M1 6.2 L4.6 3.2 L7.8 6.4 L5.2 9.6 Q2.5 11.5 0.4 10.6 Z" fill="#3f73b4"/><path d="M1.6 6.6 L4.5 4.2" stroke="#8fb4e0" stroke-width=".8"/><circle cx="9.3" cy="2.2" r="2.3" fill="#f4f6fa" stroke="#3f6496" stroke-width=".9"/><circle cx="9.3" cy="2.2" r=".8" fill="#3f6496"/></g><rect x="334" y="538.1" width="7" height="7" fill="#fff" stroke="#8a8a8a" stroke-width="1"/><path d="M335.5 541.6 h4" stroke="#333" stroke-width="1"/><g transform="translate(357.9 550.1) scale(1)"><path d="M6.3 4.7 L10.8 0.3" stroke="#d86060" stroke-width="1.3"/><path d="M1 6.2 L4.6 3.2 L7.8 6.4 L5.2 9.6 Q2.5 11.5 0.4 10.6 Z" fill="#3f73b4"/><path d="M1.6 6.6 L4.5 4.2" stroke="#8fb4e0" stroke-width=".8"/></g><g transform="translate(357.9 563.9) scale(1)"><path d="M6.3 4.7 L10.8 0.3" stroke="#d86060" stroke-width="1.3"/><path d="M1 6.2 L4.6 3.2 L7.8 6.4 L5.2 9.6 Q2.5 11.5 0.4 10.6 Z" fill="#3f73b4"/><path d="M1.6 6.6 L4.5 4.2" stroke="#8fb4e0" stroke-width=".8"/></g><g transform="translate(357.9 577.7) scale(1)"><path d="M6.3 4.7 L10.8 0.3" stroke="#d86060" stroke-width="1.3"/><path d="M1 6.2 L4.6 3.2 L7.8 6.4 L5.2 9.6 Q2.5 11.5 0.4 10.6 Z" fill="#3f73b4"/><path d="M1.6 6.6 L4.5 4.2" stroke="#8fb4e0" stroke-width=".8"/><circle cx="9.3" cy="2.2" r="2.3" fill="#f4f6fa" stroke="#3f6496" stroke-width=".9"/><circle cx="9.3" cy="2.2" r=".8" fill="#3f6496"/></g><g transform="translate(357.9 591.5) scale(1)"><path d="M6.3 4.7 L10.8 0.3" stroke="#d86060" stroke-width="1.3"/><path d="M1 6.2 L4.6 3.2 L7.8 6.4 L5.2 9.6 Q2.5 11.5 0.4 10.6 Z" fill="#3f73b4"/><path d="M1.6 6.6 L4.5 4.2" stroke="#8fb4e0" stroke-width=".8"/></g><g transform="translate(357.9 605.3) scale(1)"><path d="M6.3 4.7 L10.8 0.3" stroke="#d86060" stroke-width="1.3"/><path d="M1 6.2 L4.6 3.2 L7.8 6.4 L5.2 9.6 Q2.5 11.5 0.4 10.6 Z" fill="#3f73b4"/><path d="M1.6 6.6 L4.5 4.2" stroke="#8fb4e0" stroke-width=".8"/></g><g transform="translate(357.9 619.1) scale(1)"><path d="M6.3 4.7 L10.8 0.3" stroke="#d86060" stroke-width="1.3"/><path d="M1 6.2 L4.6 3.2 L7.8 6.4 L5.2 9.6 Q2.5 11.5 0.4 10.6 Z" fill="#3f73b4"/><path d="M1.6 6.6 L4.5 4.2" stroke="#8fb4e0" stroke-width=".8"/></g><g transform="translate(357.9 632.9) scale(1)"><path d="M6.3 4.7 L10.8 0.3" stroke="#d86060" stroke-width="1.3"/><path d="M1 6.2 L4.6 3.2 L7.8 6.4 L5.2 9.6 Q2.5 11.5 0.4 10.6 Z" fill="#3f73b4"/><path d="M1.6 6.6 L4.5 4.2" stroke="#8fb4e0" stroke-width=".8"/></g><rect x="356.9" y="245.8" width="104.6" height="12.6" fill="none" stroke="#4a4a4a" stroke-width="1.1"/></svg>
</div>
<div class="a" style="left:607.2px;top:220px;width:1.6px;height:311px;background:#6a6a6a;"></div>
<svg style="left:0;top:0" width="700" height="210" viewBox="0 0 700 210"><g transform="translate(333.2 185.3) scale(1.05)"><path d="M6.3 4.7 L10.8 0.3" stroke="#d86060" stroke-width="1.3"/><path d="M1 6.2 L4.6 3.2 L7.8 6.4 L5.2 9.6 Q2.5 11.5 0.4 10.6 Z" fill="#3f73b4"/><path d="M1.6 6.6 L4.5 4.2" stroke="#8fb4e0" stroke-width=".8"/></g><path d="M353 187.5 L362.8 196.2 M362.8 187.5 L353 196.2" stroke="#d04848" stroke-width="2.6"/><path d="M369.5 184.2 V198.6 M450.8 184.2 V198.6" stroke="#b8b8b8" stroke-width="1"/><path d="M378.4 191.5 L383.6 186.6 V189.4 H387.6 V193.6 H383.6 V196.4 Z" fill="#3567ab"/><path d="M406.8 191.5 L401.6 186.6 V189.4 H397.4 V193.6 H401.6 V196.4 Z" fill="#3567ab"/><path d="M420 186.4 L425.2 191.6 H422.2 V196 H417.8 V191.6 H414.8 Z" fill="#3567ab"/><path d="M438.8 196.4 L444 191.2 H441 V186.8 H436.6 V191.2 H433.6 Z" fill="#3567ab"/><rect x="458" y="187.1" width="12.8" height="9.5" rx="1.2" fill="#3a73b8"/><rect x="459.6" y="189.5" width="9.6" height="5.6" fill="#5b93d6"/><path d="M461 194 v-2.5 M463 194 v-3.5 h2 v3.5 M467 194 v-2.5" stroke="#e8f0fb" stroke-width=".9" fill="none"/></svg>
<svg style="left:0;top:0" width="1100" height="680" viewBox="0 0 1100 680"><g transform="translate(327 159.5) scale(1.02)"><path d="M6.3 4.7 L10.8 0.3" stroke="#d86060" stroke-width="1.3"/><path d="M1 6.2 L4.6 3.2 L7.8 6.4 L5.2 9.6 Q2.5 11.5 0.4 10.6 Z" fill="#3f73b4"/><path d="M1.6 6.6 L4.5 4.2" stroke="#8fb4e0" stroke-width=".8"/></g><rect x="387" y="159" width="9" height="7.5" fill="#c9a27a"/><path d="M387 161 h9 M387 163.5 h9" stroke="#8a5a3a" stroke-width=".8"/><ellipse cx="394.6" cy="168" rx="3.8" ry="2.2" fill="#f0b83a" stroke="#b07818" stroke-width=".6"/><rect x="386.5" y="158.3" width="10" height="1.6" fill="#b05050"/><path d="M452 168.5 V161 L455 159.5 V163 H460 V168.5 Z" fill="#3f73b4"/><path d="M458.5 163 L463 160.5 M460 168.5 H464.5" stroke="#c04040" stroke-width="1.3"/><rect x="451.3" y="168" width="11" height="1.4" fill="#2f4f80"/><rect x="516" y="161.3" width="6" height="3.2" fill="#c86060"/><rect x="513" y="164.5" width="6" height="3.4" fill="#b04a4a"/><rect x="519.4" y="164.5" width="6" height="3.4" fill="#d88a8a"/><rect x="588" y="160.5" width="10" height="9.5" fill="#e6eef8" stroke="#7a9cc8" stroke-width=".9"/><path d="M588 163.3 h10 M591.3 163.3 v6.7 M594.6 163.3 v6.7 M588 166.6 h10" stroke="#8fb0d8" stroke-width=".7"/><circle cx="596.3" cy="159.8" r="3.6" fill="#f8f8f8" stroke="#7a8aa0" stroke-width=".9"/><path d="M596.3 157.8 V159.8 H598" stroke="#556" stroke-width=".8" fill="none"/><g transform="translate(737.4 164.5)"><path d="M-6 -2 L-2.5 -6 L1.5 -2.5 L-2.5 1.5 Z" fill="#d03050"/><path d="M6 -2 L2.5 -6 L-1.5 -2.5 L2.5 1.5 Z" fill="#3a5ad0"/><path d="M-6 2.5 L-2.5 -1 L1.5 2.5 L-2.5 6.5 Z" fill="#283a90"/><path d="M6 2.5 L2.5 -1 L-1.5 2.5 L2.5 6.5 Z" fill="#c02868"/><circle r="2" fill="#f4f4f4"/></g><defs><linearGradient id="lg2" x1="0" y1="0" x2="0" y2="1"><stop offset="0" stop-color="#4ab8e6"/><stop offset="1" stop-color="#3a8fd8"/></linearGradient></defs><path d="M324 112.3 H332 V120.5 Q332 123.6 328.8 123.6 H320.5 V115.8 Q320.5 112.3 324 112.3 Z" fill="url(#lg2)"/><circle cx="326.3" cy="115.8" r="2" fill="#fff"/><path d="M324.8 117.5 H327.8 L327.3 120 L328.6 122.8 H324 L325.3 120 Z" fill="#f4f8ff"/><path d="M998.7 118.2 H1006.4" stroke="#c8c8c8" stroke-width="1"/><rect x="1035.6" y="114.3" width="6.6" height="7.3" fill="none" stroke="#222" stroke-width="1.1"/><path d="M1071.8 114 L1080.2 122 M1080.2 114 L1071.8 122" stroke="#222" stroke-width="1.1"/><path d="M1091.5 668 v1 M1091.5 671 v1 M1088.5 671 v1 M1085.5 671.5 v.8 M1088.5 668.5 v.8" stroke="#b0b0b0" stroke-width="1.4"/></svg>
<div class="a" style="left:622.5px;top:185.8px;width:80.8px;height:15.5px;background:#fff"></div><span class="t" style="left:624.40px;top:189.03px;font-size:9.75px;color:#1a1a1a;letter-spacing:-0.051px;">Месяцы\Кварта</span><svg style="left:697.5px;top:192px" width="6" height="4"><path d="M0 0 H5 L2.5 3 Z" fill="#222"/></svg>
<div class="a" style="left:712.3px;top:185.8px;width:104.4px;height:15.5px;background:#fff"></div><span class="t" style="left:714.60px;top:189.03px;font-size:9.75px;color:#1a1a1a;letter-spacing:-0.344px;">Вариант 1</span><svg style="left:810.3px;top:192px" width="6" height="4"><path d="M0 0 H5 L2.5 3 Z" fill="#222"/></svg>
<div class="a" style="left:818px;top:185.8px;width:60.4px;height:15.5px;background:#ffffff;"></div>
<span class="t" style="left:820.50px;top:187.22px;font-size:9.75px;color:#666;letter-spacing:-0.259px;">03.01.2020</span>
<div class="a" style="left:924.4px;top:185.8px;width:103.8px;height:15.5px;background:#fff"></div><span class="t" style="left:926.20px;top:189.03px;font-size:9.75px;color:#1a1a1a;letter-spacing:-0.091px;">8-часовой рабочий д</span><svg style="left:1021.8px;top:192px" width="6" height="4"><path d="M0 0 H5 L2.5 3 Z" fill="#222"/></svg>
<div class="a" style="left:1017px;top:186.8px;width:4.5px;height:13.5px;background:#fff;"></div>
<svg style="left:0;top:0" width="1100" height="210" viewBox="0 0 1100 210"><rect x="882" y="185.6" width="15" height="13.6" rx="1.5" fill="#fafafa" stroke="#4a5a78" stroke-width="1.1"/><rect x="882" y="185.6" width="15" height="3.6" fill="#4a78b8"/><text x="889.5" y="197.6" font-size="8" font-weight="bold" fill="#334" text-anchor="middle" font-family="'Liberation Sans',sans-serif">15</text><rect x="906" y="186.5" width="8.5" height="8.5" rx="1" fill="#d4e4f8" stroke="#4a78b8" stroke-width=".9"/><rect x="903" y="189.5" width="8.5" height="8.5" rx="1" fill="#b8d0f0" stroke="#4a78b8" stroke-width=".9"/><path d="M919.6 184.5 V199.5 M1061.5 184.5 V199.5 M708.8 184.5 V199.5" stroke="#c4c4c4" stroke-width="1"/><rect x="1040" y="187.6" width="9" height="11" fill="#eee6a8" stroke="#b0a258" stroke-width="1"/><rect x="1040" y="187.6" width="9" height="2.6" fill="#c8b850"/><text x="1044.5" y="197" font-size="6.5" fill="#665" text-anchor="middle" font-family="'Liberation Sans',sans-serif">1</text><path d="M1076.5 187.5 Q1071 188 1072.5 192 Q1074.5 195.5 1077 196 M1071.5 191.5 l1.5 2 l2 -1.5" stroke="#3a6ab8" stroke-width="1.4" fill="none"/></svg>
<div class="a" style="left:621.7px;top:204.4px;width:455.3px;height:434.2px;background:#f0f0f0;overflow:hidden"></div>
<svg style="left:0;top:0" width="1100" height="680" viewBox="0 0 1100 680"><defs><linearGradient id="gb" x1="0" y1="0" x2="0" y2="1"><stop offset="0" stop-color="#86cdee"/><stop offset=".45" stop-color="#3a9acc"/><stop offset="1" stop-color="#2478a8"/></linearGradient><linearGradient id="gg" x1="0" y1="0" x2="0" y2="1"><stop offset="0" stop-color="#b4d66e"/><stop offset=".45" stop-color="#83b040"/><stop offset="1" stop-color="#5e8c2a"/></linearGradient><linearGradient id="gs" x1="0" y1="0" x2="0" y2="1"><stop offset="0" stop-color="#8a8a8a"/><stop offset=".5" stop-color="#3c3c3c"/><stop offset="1" stop-color="#1a1a1a"/></linearGradient><clipPath id="gclip"><rect x="621.7" y="243.4" width="441.5" height="380.3"/></clipPath></defs><rect x="621.7" y="204.4" width="441.5" height="39" fill="#f1f1f1"/><path d="M621.7 204.9 H1063.2 M621.7 224.2 H1063.2 M621.7 243.2 H1063.2" stroke="#c6c6c6" stroke-width="1"/><path d="M621.7 224.2 V243.2 M641.22 224.2 V243.2 M660.74 224.2 V243.2 M680.26 224.2 V243.2 M699.78 224.2 V243.2 M719.3 204.4 V243.2 M738.82 224.2 V243.2 M758.34 224.2 V243.2 M777.86 224.2 V243.2 M797.38 224.2 V243.2 M816.9 224.2 V243.2 M836.42 224.2 V243.2 M855.94 204.4 V243.2 M875.46 224.2 V243.2 M894.98 224.2 V243.2 M914.5 224.2 V243.2 M934.02 224.2 V243.2 M953.54 224.2 V243.2 M973.06 224.2 V243.2 M992.58 204.4 V243.2 M1012.1 224.2 V243.2 M1031.62 224.2 V243.2 M1051.14 224.2 V243.2 " stroke="#bdbdbd" stroke-width="1.2"/><path d="M622 204.4 V638" stroke="#b4b4b4" stroke-width="1"/><g clip-path="url(#gclip)"><rect x="621.7" y="243.4" width="441.5" height="380.3" fill="#eff2f8"/><rect x="629.6" y="243.4" width="6.9" height="380.3" fill="#fff"/><rect x="649.12" y="243.4" width="6.9" height="380.3" fill="#fff"/><rect x="668.64" y="243.4" width="6.9" height="380.3" fill="#fff"/><rect x="727.2" y="243.4" width="6.9" height="380.3" fill="#fff"/><rect x="746.72" y="243.4" width="6.9" height="380.3" fill="#fff"/><rect x="766.24" y="243.4" width="6.9" height="380.3" fill="#fff"/><rect x="785.76" y="243.4" width="6.9" height="380.3" fill="#fff"/><rect x="805.28" y="243.4" width="6.9" height="380.3" fill="#fff"/><rect x="863.84" y="243.4" width="6.9" height="380.3" fill="#fff"/><rect x="883.36" y="243.4" width="6.9" height="380.3" fill="#fff"/><rect x="902.88" y="243.4" width="6.9" height="380.3" fill="#fff"/><rect x="922.4" y="243.4" width="6.9" height="380.3" fill="#fff"/><rect x="941.92" y="243.4" width="6.9" height="380.3" fill="#fff"/><rect x="1000.48" y="243.4" width="6.9" height="380.3" fill="#fff"/><rect x="1020" y="243.4" width="6.9" height="380.3" fill="#fff"/><rect x="1039.52" y="243.4" width="6.9" height="380.3" fill="#fff"/><rect x="1059.04" y="243.4" width="6.9" height="380.3" fill="#fff"/><path d="M661.8 243.4 V623.7" stroke="#e84040" stroke-width="1" stroke-dasharray="1.2 1.2"/><rect x="668" y="246.8" width="400.2" height="4" fill="url(#gs)" stroke="#111" stroke-width=".6"/><path d="M665 246.5 H673.6 V251.4 L669.3 255.4 L665 251.4 Z" fill="#4a4a4a" stroke="#161616" stroke-width=".8"/><rect x="826.1" y="260.5" width="242.1" height="9.2" fill="#0c0c0c"/><rect x="828.7" y="261.4" width="239.5" height="7.4" rx="1.2" fill="url(#gb)"/><rect x="856.5" y="274.3" width="211.7" height="9.2" fill="#0c0c0c"/><rect x="859.1" y="275.2" width="209.1" height="7.4" rx="1.2" fill="url(#gb)"/><rect x="668.7" y="288.1" width="157.4" height="9.2" fill="#0c0c0c"/><rect x="671.3" y="289" width="152.4" height="7.4" rx="1.2" fill="url(#gb)"/><rect x="660.7" y="302" width="407.5" height="4" fill="url(#gs)" stroke="#111" stroke-width=".6"/><path d="M657.7 301.7 H666.3 V306.6 L662 310.6 L657.7 306.6 Z" fill="#4a4a4a" stroke="#161616" stroke-width=".8"/><rect x="1041.8" y="315.7" width="26.4" height="9.2" fill="#0c0c0c"/><rect x="1044.4" y="316.6" width="23.8" height="7.4" rx="1.2" fill="url(#gb)"/><rect x="804" y="329.6" width="264.2" height="4" fill="url(#gs)" stroke="#111" stroke-width=".6"/><path d="M801 329.3 H809.6 V334.2 L805.3 338.2 L801 334.2 Z" fill="#4a4a4a" stroke="#161616" stroke-width=".8"/><rect x="804.7" y="343.3" width="263.5" height="9.2" fill="#0c0c0c"/><rect x="807.3" y="344.2" width="260.9" height="7.4" rx="1.2" fill="url(#gb)"/><rect x="660.7" y="398.6" width="359.9" height="4" fill="url(#gs)" stroke="#111" stroke-width=".6"/><path d="M657.7 398.3 H666.3 V403.2 L662 407.2 L657.7 403.2 Z" fill="#4a4a4a" stroke="#161616" stroke-width=".8"/><path d="M1012 398.3 H1020.6 V403.2 L1016.3 407.2 L1012 403.2 Z" fill="#4a4a4a" stroke="#161616" stroke-width=".8"/><rect x="661.8" y="412.3" width="354.3" height="9.2" fill="#0c0c0c"/><rect x="664.4" y="413.2" width="349.3" height="7.4" rx="1.2" fill="url(#gg)"/><rect x="661.8" y="426.1" width="326.7" height="9.2" fill="#0c0c0c"/><rect x="664.4" y="427" width="321.7" height="7.4" rx="1.2" fill="url(#gg)"/><rect x="661.8" y="439.9" width="326.7" height="9.2" fill="#0c0c0c"/><rect x="664.4" y="440.8" width="321.7" height="7.4" rx="1.2" fill="url(#gg)"/><rect x="661.8" y="453.7" width="326.7" height="9.2" fill="#0c0c0c"/><rect x="664.4" y="454.6" width="321.7" height="7.4" rx="1.2" fill="url(#gg)"/><path d="M1019.6 406 V464.5 H1017.6" stroke="#4a7a98" stroke-width="1" fill="none"/><path d="M1015.6 463.8 h4 l-2 3 z" fill="#4a7a98"/><rect x="1015.6" y="467.6" width="52.6" height="4" fill="url(#gs)" stroke="#111" stroke-width=".6"/><path d="M1012.6 467.3 H1021.2 V472.2 L1016.9 476.2 L1012.6 472.2 Z" fill="#4a4a4a" stroke="#161616" stroke-width=".8"/><rect x="1016.1" y="481.3" width="52.1" height="9.2" fill="#0c0c0c"/><rect x="1018.7" y="482.2" width="49.5" height="7.4" rx="1.2" fill="url(#gg)"/></g><rect x="1063.2" y="204.4" width="13.8" height="419.3" fill="#f0f0f0"/><rect x="1063.2" y="219.2" width="13.8" height="304" fill="#cdcdcd"/><path d="M1066.8 213.6 L1070.1 210.3 L1073.4 213.6 M1066.8 615.3 L1070.1 618.6 L1073.4 615.3 M630.6 628 L627.6 631.2 L630.6 634.4 M1054.8 628 L1057.8 631.2 L1054.8 634.4" stroke="#8a8a8a" stroke-width="1" fill="none"/><rect x="622.7" y="623.7" width="454.5" height="15" fill="#f0f0f0"/><path d="M630.6 628 L627.6 631.2 L630.6 634.4 M1054.8 628 L1057.8 631.2 L1054.8 634.4" stroke="#8a8a8a" stroke-width="1" fill="none"/><rect x="636.1" y="624.5" width="13.2" height="13.6" fill="#cdcdcd"/></svg>
<span class="t" style="left:622.50px;top:209.62px;font-size:9.75px;color:#333;letter-spacing:-0.279px;">01.01.2020</span>
<span class="t" style="left:720.50px;top:209.62px;font-size:9.75px;color:#333;letter-spacing:-0.279px;">06.01.2020</span>
<span class="t" style="left:856.90px;top:209.62px;font-size:9.75px;color:#333;letter-spacing:-0.279px;">13.01.2020</span>
<span class="t" style="left:992.80px;top:209.62px;font-size:9.75px;color:#333;letter-spacing:-0.279px;">20.01.2020</span>
<span class="t" style="left:623.00px;top:228.82px;font-size:9.75px;color:#333;">Ср</span>
<span class="t" style="left:642.52px;top:228.82px;font-size:9.75px;color:#333;">Чт</span>
<span class="t" style="left:662.04px;top:228.82px;font-size:9.75px;color:#333;">Пт</span>
<span class="t" style="left:681.56px;top:228.82px;font-size:9.75px;color:#333;">Сб</span>
<span class="t" style="left:701.08px;top:228.82px;font-size:9.75px;color:#333;">Вс</span>
<span class="t" style="left:720.60px;top:228.82px;font-size:9.75px;color:#333;">Пн</span>
<span class="t" style="left:740.12px;top:228.82px;font-size:9.75px;color:#333;">Вт</span>
<span class="t" style="left:759.64px;top:228.82px;font-size:9.75px;color:#333;">Ср</span>
<span class="t" style="left:779.16px;top:228.82px;font-size:9.75px;color:#333;">Чт</span>
<span class="t" style="left:798.68px;top:228.82px;font-size:9.75px;color:#333;">Пт</span>
<span class="t" style="left:818.20px;top:228.82px;font-size:9.75px;color:#333;">Сб</span>
<span class="t" style="left:837.72px;top:228.82px;font-size:9.75px;color:#333;">Вс</span>
<span class="t" style="left:857.24px;top:228.82px;font-size:9.75px;color:#333;">Пн</span>
<span class="t" style="left:876.76px;top:228.82px;font-size:9.75px;color:#333;">Вт</span>
<span class="t" style="left:896.28px;top:228.82px;font-size:9.75px;color:#333;">Ср</span>
<span class="t" style="left:915.80px;top:228.82px;font-size:9.75px;color:#333;">Чт</span>
<span class="t" style="left:935.32px;top:228.82px;font-size:9.75px;color:#333;">Пт</span>
<span class="t" style="left:954.84px;top:228.82px;font-size:9.75px;color:#333;">Сб</span>
<span class="t" style="left:974.36px;top:228.82px;font-size:9.75px;color:#333;">Вс</span>
<span class="t" style="left:993.88px;top:228.82px;font-size:9.75px;color:#333;">Пн</span>
<span class="t" style="left:1013.40px;top:228.82px;font-size:9.75px;color:#333;">Вт</span>
<span class="t" style="left:1032.92px;top:228.82px;font-size:9.75px;color:#333;">Ср</span>
<div class="a" style="left:1052.44px;top:226px;width:10.76px;height:16px;overflow:hidden"><span class="t" style="left:0.00px;top:2.82px;font-size:9.75px;color:#333;">Чт</span></div>
<div class="a" style="left:0;top:0;width:1.3px;height:877px;background:#f6f6f6"></div>
<div class="a" style="left:1557.9px;top:0;width:2.1px;height:877px;background:#fbfbfb"></div>
</div>
</body></html>
